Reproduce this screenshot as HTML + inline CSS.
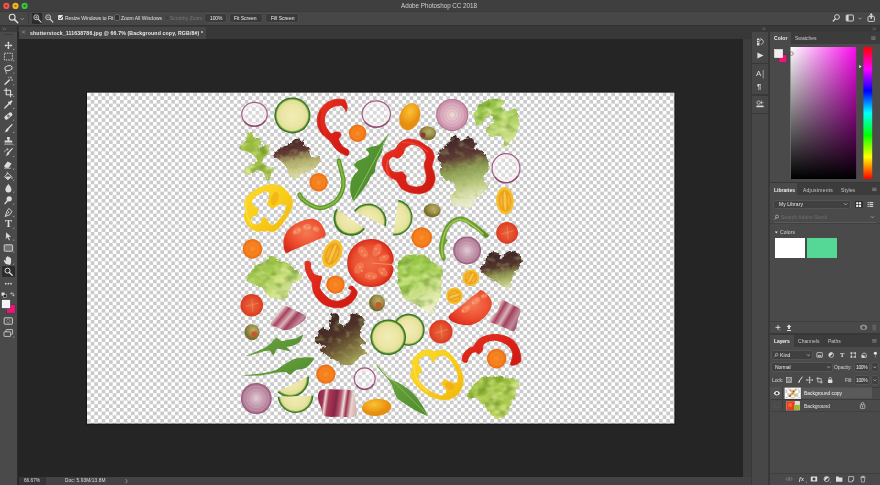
<!DOCTYPE html>
<html lang="en">
<head>
<meta charset="utf-8">
<title>Adobe Photoshop CC 2018</title>
<style>
html,body{margin:0;padding:0;background:#252525;}
#app{position:relative;width:880px;height:485px;overflow:hidden;background:#252525;font-family:"Liberation Sans",sans-serif;}
#app>div{position:absolute;}
#app>span{position:absolute;white-space:nowrap;will-change:transform;}
#app>svg{position:absolute;left:0;top:0;}
</style>
</head>
<body>
<div id="app">
<div style="left:0px;top:0px;width:880px;height:11px;background:#3f3f3f;"></div>
<div style="left:0px;top:11px;width:880px;height:14.6px;background:#474747;"></div>
<div style="left:0px;top:10.5px;width:880px;height:0.6px;background:#3a3a3a;"></div>
<div style="left:0px;top:25.6px;width:880px;height:6px;background:#383838;"></div>
<div style="left:0px;top:25.2px;width:880px;height:0.6px;background:#333;"></div>
<div style="left:0px;top:31.6px;width:17.2px;height:453.4px;background:#4a4a4a;"></div>
<div style="left:0px;top:25.6px;width:17.2px;height:6px;background:#3c3c3c;"></div>
<div style="left:17.2px;top:25.6px;width:1.3px;height:460px;background:#2b2b2b;"></div>
<div style="left:18.5px;top:25.6px;width:732.3px;height:13.4px;background:#383838;"></div>
<div style="left:18.5px;top:26.8px;width:187px;height:12.2px;background:#464646;"></div>
<div style="left:18.5px;top:39px;width:724.5px;height:438.3px;background:#252525;"></div>
<div style="left:742.8px;top:39px;width:8px;height:446px;background:#3e3e3e;"></div>
<div style="left:18.5px;top:477.3px;width:732.3px;height:7.7px;background:#434343;"></div>
<div style="left:18.5px;top:477.3px;width:27px;height:7.7px;background:#363636;"></div>
<div style="left:750.8px;top:25.6px;width:129.2px;height:459.4px;background:#383838;"></div>
<div style="left:752px;top:32px;width:16.4px;height:30.5px;background:#474747;"></div>
<div style="left:752px;top:64px;width:16.4px;height:30px;background:#474747;"></div>
<div style="left:752px;top:95.5px;width:16.4px;height:17px;background:#474747;"></div>
<div style="left:752px;top:114px;width:16.4px;height:371px;background:#474747;"></div>
<div style="left:770.2px;top:32px;width:109.8px;height:12px;background:#3c3c3c;"></div>
<div style="left:770.2px;top:32px;width:20.5px;height:12.5px;background:#4a4a4a;"></div>
<div style="left:770.2px;top:44px;width:109.8px;height:137.5px;background:#4a4a4a;"></div>
<div style="left:770.2px;top:183.3px;width:109.8px;height:12px;background:#3c3c3c;"></div>
<div style="left:770.2px;top:183.3px;width:26.5px;height:12.5px;background:#4a4a4a;"></div>
<div style="left:770.2px;top:195.3px;width:109.8px;height:138px;background:#4a4a4a;"></div>
<div style="left:770.2px;top:321.5px;width:109.8px;height:11.8px;background:#494949;"></div>
<div style="left:770.2px;top:321.3px;width:109.8px;height:0.6px;background:#3f3f3f;"></div>
<div style="left:770.2px;top:334.8px;width:109.8px;height:12px;background:#3c3c3c;"></div>
<div style="left:770.2px;top:334.8px;width:23.5px;height:12.5px;background:#4a4a4a;"></div>
<div style="left:770.2px;top:346.8px;width:109.8px;height:138.2px;background:#4a4a4a;"></div>
<div style="left:770.2px;top:473px;width:109.8px;height:12px;background:#494949;"></div>
<div style="left:770.2px;top:472.8px;width:109.8px;height:0.6px;background:#3f3f3f;"></div>
<div style="left:28.3px;top:13px;width:0.6px;height:10.5px;background:#3a3a3a;"></div>
<div style="left:32px;top:12.8px;width:10.4px;height:10.8px;background:#2c2c2c;"></div>
<div style="left:58.2px;top:15.3px;width:5.2px;height:5.2px;background:#e6e6e6;border-radius:1px;"></div>
<div style="left:114.6px;top:15.4px;width:4.6px;height:4.6px;background:#333;border-radius:1px;box-shadow:0 0 0 0.6px #808080;"></div>
<div style="left:164.6px;top:15.4px;width:4.2px;height:4.2px;background:#404040;border-radius:1px;box-shadow:0 0 0 0.5px #555;"></div>
<div style="left:205px;top:14.2px;width:20.599999999999994px;height:7.4px;background:#3a3a3a;border-radius:1.3px;box-shadow:0 0 0 0.5px #5a5a5a;"></div>
<div style="left:230.4px;top:14.2px;width:31.49999999999997px;height:7.4px;background:#3a3a3a;border-radius:1.3px;box-shadow:0 0 0 0.5px #5a5a5a;"></div>
<div style="left:266.3px;top:14.2px;width:31.69999999999999px;height:7.4px;background:#3a3a3a;border-radius:1.3px;box-shadow:0 0 0 0.5px #5a5a5a;"></div>
<div style="left:869.9px;top:15.8px;width:2.6px;height:1.6px;background:#474747;"></div>
<div style="left:4px;top:33.6px;width:9px;height:0.5px;background:#3a3a3a;"></div>
<div style="left:2px;top:265.8px;width:13px;height:11.4px;background:#2c2c2c;border-radius:1px;"></div>
<div style="left:774px;top:200.6px;width:75.6px;height:7.2px;background:#404040;border-radius:1.3px;box-shadow:0 0 0 0.5px #5e5e5e;"></div>
<div style="left:854.6px;top:200.6px;width:8px;height:7.8px;background:#2e2e2e;border-radius:1px;"></div>
<div style="left:774px;top:221.6px;width:101.5px;height:0.5px;background:#5a5a5a;"></div>
<div style="left:770.2px;top:222.8px;width:109.8px;height:1.4px;background:#414141;"></div>
<div style="left:775px;top:238.4px;width:30.2px;height:19.6px;background:#ffffff;"></div>
<div style="left:807px;top:238.4px;width:30.2px;height:19.6px;background:#55d896;"></div>
<div style="left:786.6px;top:329.8px;width:4.8px;height:0.9px;background:#e0e0e0;"></div>
<div style="left:772px;top:351.4px;width:40px;height:7.4px;background:#404040;border-radius:1.3px;box-shadow:0 0 0 0.5px #5e5e5e;"></div>
<div style="left:772px;top:363.4px;width:60.2px;height:7.6px;background:#404040;border-radius:1.3px;box-shadow:0 0 0 0.5px #5e5e5e;"></div>
<div style="left:854.6px;top:363.4px;width:14.6px;height:7.6px;background:#404040;border-radius:1.3px;box-shadow:0 0 0 0.5px #5e5e5e;"></div>
<div style="left:871.6px;top:363.4px;width:6.4px;height:7.6px;background:#404040;border-radius:1.3px;box-shadow:0 0 0 0.5px #5e5e5e;"></div>
<div style="left:854.6px;top:376.4px;width:14.6px;height:7.6px;background:#404040;border-radius:1.3px;box-shadow:0 0 0 0.5px #5e5e5e;"></div>
<div style="left:871.6px;top:376.4px;width:6.4px;height:7.6px;background:#404040;border-radius:1.3px;box-shadow:0 0 0 0.5px #5e5e5e;"></div>
<div style="left:770.5px;top:386.8px;width:109.5px;height:0.5px;background:#3c3c3c;"></div>
<div style="left:770.2px;top:387.2px;width:102px;height:11.6px;background:#515151;"></div>
<div style="left:802px;top:387.6px;width:70.2px;height:10.8px;background:#5a5a5a;"></div>
<div style="left:770.5px;top:399.2px;width:109.5px;height:0.5px;background:#3c3c3c;"></div>
<div style="left:770.5px;top:411.4px;width:109.5px;height:0.5px;background:#404040;"></div>
<div style="left:782.2px;top:387.2px;width:0.5px;height:24.2px;background:#3e3e3e;"></div>
<svg width="880" height="485" viewBox="0 0 880 485">
<defs>
<pattern id="chk" x="87" y="92.6" width="7.3334" height="7.3334" patternUnits="userSpaceOnUse">
<rect width="7.3334" height="7.3334" fill="#fff"/><rect x="3.6667" width="3.6667" height="3.6667" fill="#cbcbcb"/><rect y="3.6667" width="3.6667" height="3.6667" fill="#cbcbcb"/></pattern>
<radialGradient id="gCuc"><stop offset="0" stop-color="#f1edb6"/><stop offset="0.6" stop-color="#ebe6a4"/><stop offset="0.84" stop-color="#e0de98"/><stop offset="0.89" stop-color="#8ab048"/><stop offset="0.94" stop-color="#3f7f26"/><stop offset="1" stop-color="#2a641a"/></radialGradient>
<radialGradient id="gCar"><stop offset="0" stop-color="#f9922e"/><stop offset="0.45" stop-color="#f47c1a"/><stop offset="0.55" stop-color="#f68622"/><stop offset="0.9" stop-color="#f07214"/><stop offset="1" stop-color="#e8660e"/></radialGradient>
<radialGradient id="gOni"><stop offset="0" stop-color="#eedcd4"/><stop offset="0.35" stop-color="#e2c0c8"/><stop offset="0.7" stop-color="#d8a8ba"/><stop offset="0.92" stop-color="#c88ea6"/><stop offset="1" stop-color="#a25a80"/></radialGradient>
<radialGradient id="gOniR"><stop offset="0" stop-color="#e2ccd6"/><stop offset="0.4" stop-color="#c8a0b4"/><stop offset="0.85" stop-color="#b27c96"/><stop offset="1" stop-color="#925276"/></radialGradient>
<radialGradient id="gTom"><stop offset="0" stop-color="#f2623a"/><stop offset="0.6" stop-color="#e8422a"/><stop offset="1" stop-color="#dc3020"/></radialGradient>
<radialGradient id="gChe"><stop offset="0" stop-color="#e8683a"/><stop offset="0.7" stop-color="#e24a2a"/><stop offset="1" stop-color="#d83a22"/></radialGradient>
<radialGradient id="gYel" cx="0.42" cy="0.32"><stop offset="0" stop-color="#f9c236"/><stop offset="0.6" stop-color="#f0a41c"/><stop offset="1" stop-color="#e68e12"/></radialGradient>
<radialGradient id="gYelC"><stop offset="0" stop-color="#f4b028"/><stop offset="0.8" stop-color="#f5bc2a"/><stop offset="1" stop-color="#f2c432"/></radialGradient>
<radialGradient id="gOli" cx="0.58" cy="0.38"><stop offset="0" stop-color="#bcae68"/><stop offset="0.65" stop-color="#9a8e46"/><stop offset="1" stop-color="#7a7032"/></radialGradient>
<linearGradient id="gLetG" x1="0" y1="0" x2="0.3" y2="1"><stop offset="0" stop-color="#86b83c"/><stop offset="0.5" stop-color="#a6cc5a"/><stop offset="1" stop-color="#cfe08e"/></linearGradient>
<linearGradient id="gLetG2" x1="0" y1="0" x2="0" y2="1"><stop offset="0" stop-color="#7fb63a"/><stop offset="0.6" stop-color="#9cc850"/><stop offset="1" stop-color="#b8d672"/></linearGradient>
<linearGradient id="gLetF" x1="0" y1="0" x2="0.8" y2="1"><stop offset="0" stop-color="#88b43a"/><stop offset="0.45" stop-color="#a8cc54"/><stop offset="0.8" stop-color="#cfe08c"/><stop offset="1" stop-color="#e4eaae"/></linearGradient>
<linearGradient id="gLetC" x1="0.3" y1="0" x2="0.65" y2="1"><stop offset="0" stop-color="#90c442"/><stop offset="0.4" stop-color="#a6d058"/><stop offset="0.65" stop-color="#cce08c"/><stop offset="0.85" stop-color="#e6ecbc"/><stop offset="1" stop-color="#f2f2d8"/></linearGradient>
<linearGradient id="gLetO" x1="0.2" y1="0" x2="0.5" y2="1"><stop offset="0" stop-color="#90b634"/><stop offset="0.6" stop-color="#a6c648"/><stop offset="1" stop-color="#bcd460"/></linearGradient>
<linearGradient id="gLetD2" x1="0.4" y1="0" x2="0.6" y2="1"><stop offset="0" stop-color="#3a2226"/><stop offset="0.4" stop-color="#54342e"/><stop offset="0.6" stop-color="#8e9450"/><stop offset="0.85" stop-color="#c4cc84"/><stop offset="1" stop-color="#e8e8c0"/></linearGradient>
<linearGradient id="gRad2" x1="0" y1="0.2" x2="1" y2="0.8"><stop offset="0" stop-color="#c8909c"/><stop offset="0.2" stop-color="#eadcd8"/><stop offset="0.35" stop-color="#a8405c"/><stop offset="0.5" stop-color="#d8b4bc"/><stop offset="0.62" stop-color="#a2405c"/><stop offset="0.8" stop-color="#c08a9a"/><stop offset="1" stop-color="#8a2e4c"/></linearGradient>
<linearGradient id="gRadB" x1="0" y1="0" x2="1" y2="0.1"><stop offset="0" stop-color="#8e2848"/><stop offset="0.16" stop-color="#a03454"/><stop offset="0.22" stop-color="#ead8d0"/><stop offset="0.3" stop-color="#a83c58"/><stop offset="0.5" stop-color="#8a2444"/><stop offset="0.62" stop-color="#b86078"/><stop offset="0.7" stop-color="#efe2d8"/><stop offset="0.78" stop-color="#9c3050"/><stop offset="0.9" stop-color="#e8d4cc"/><stop offset="1" stop-color="#d8b8b4"/></linearGradient>
<linearGradient id="gAru2" x1="0" y1="0" x2="1" y2="0.6"><stop offset="0" stop-color="#72a842"/><stop offset="1" stop-color="#548f30"/></linearGradient>
<linearGradient id="gPepR" x1="0" y1="0" x2="1" y2="1"><stop offset="0" stop-color="#e83420"/><stop offset="0.5" stop-color="#dc2218"/><stop offset="1" stop-color="#cc1a12"/></linearGradient>
<linearGradient id="gPepG" x1="0" y1="0" x2="1" y2="0.5"><stop offset="0" stop-color="#5e9426"/><stop offset="0.5" stop-color="#74a630"/><stop offset="1" stop-color="#5a8c24"/></linearGradient>
<linearGradient id="gPepY" x1="0" y1="0" x2="1" y2="1"><stop offset="0" stop-color="#fbdc2a"/><stop offset="0.55" stop-color="#f8cc18"/><stop offset="1" stop-color="#f2b410"/></linearGradient>
<radialGradient id="gTomB"><stop offset="0" stop-color="#f06a44"/><stop offset="0.7" stop-color="#ec5232"/><stop offset="0.9" stop-color="#e23a22"/><stop offset="1" stop-color="#d42c1a"/></radialGradient>
<radialGradient id="gTomW" cx="0.55" cy="0.4" r="0.65"><stop offset="0" stop-color="#f47a52"/><stop offset="0.55" stop-color="#ee5434"/><stop offset="0.85" stop-color="#e43a24"/><stop offset="1" stop-color="#d82c1c"/></radialGradient>
<linearGradient id="gLetG3" x1="0" y1="0" x2="0.2" y2="1"><stop offset="0" stop-color="#a6c448"/><stop offset="0.5" stop-color="#94b63a"/><stop offset="1" stop-color="#b0ca5a"/></linearGradient>
<linearGradient id="gLetR1" x1="0.3" y1="0" x2="0.5" y2="1"><stop offset="0" stop-color="#3e2024"/><stop offset="0.34" stop-color="#623a34"/><stop offset="0.56" stop-color="#aca868"/><stop offset="0.8" stop-color="#ccca8c"/><stop offset="1" stop-color="#dcdcaa"/></linearGradient>
<linearGradient id="gLetR" x1="0.3" y1="0" x2="0.45" y2="1"><stop offset="0" stop-color="#3c2226"/><stop offset="0.3" stop-color="#5c3a34"/><stop offset="0.48" stop-color="#8a9a50"/><stop offset="0.68" stop-color="#b4c47a"/><stop offset="0.85" stop-color="#dce2b0"/><stop offset="1" stop-color="#ecedd0"/></linearGradient>
<linearGradient id="gLetD" x1="0" y1="0" x2="0.6" y2="1"><stop offset="0" stop-color="#36201e"/><stop offset="0.5" stop-color="#4e3228"/><stop offset="0.78" stop-color="#7a6a3c"/><stop offset="1" stop-color="#a09c58"/></linearGradient>
<linearGradient id="gRad" x1="0" y1="0" x2="1" y2="0.4"><stop offset="0" stop-color="#9a2a4c"/><stop offset="0.3" stop-color="#e8d0d6"/><stop offset="0.5" stop-color="#a03054"/><stop offset="0.75" stop-color="#d8b0bc"/><stop offset="1" stop-color="#8a2444"/></linearGradient>
<linearGradient id="gAru" x1="0" y1="0" x2="1" y2="1"><stop offset="0" stop-color="#5e9c36"/><stop offset="1" stop-color="#47872c"/></linearGradient>
<filter id="rough" x="-10%" y="-10%" width="120%" height="120%"><feTurbulence type="fractalNoise" baseFrequency="0.22" numOctaves="2" seed="4" result="n"/><feDisplacementMap in="SourceGraphic" in2="n" scale="5" xChannelSelector="R" yChannelSelector="G"/></filter>
<filter id="leaf" x="-15%" y="-15%" width="130%" height="130%" color-interpolation-filters="sRGB">
<feTurbulence type="fractalNoise" baseFrequency="0.25" numOctaves="2" seed="4" result="n"/>
<feDisplacementMap in="SourceGraphic" in2="n" scale="3.5" xChannelSelector="R" yChannelSelector="G" result="d"/>
<feTurbulence type="fractalNoise" baseFrequency="0.09 0.12" numOctaves="2" seed="11" result="t"/>
<feColorMatrix in="t" type="matrix" values="0 0 0 0 0.9  0 0 0 0 0.95  0 0 0 0 0.62  0 1.8 0 0 -0.72" result="hl"/>
<feComposite in="hl" in2="d" operator="in" result="hl2"/>
<feColorMatrix in="t" type="matrix" values="0 0 0 0 0.3  0 0 0 0 0.48  0 0 0 0 0.08  0 0 1.4 0 -0.64" result="sh"/>
<feComposite in="sh" in2="d" operator="in" result="sh2"/>
<feMerge><feMergeNode in="d"/><feMergeNode in="hl2"/><feMergeNode in="sh2"/></feMerge>
</filter>
<filter id="leafR" x="-15%" y="-15%" width="130%" height="130%" color-interpolation-filters="sRGB">
<feTurbulence type="fractalNoise" baseFrequency="0.3" numOctaves="2" seed="8" result="n"/>
<feDisplacementMap in="SourceGraphic" in2="n" scale="4.5" xChannelSelector="R" yChannelSelector="G" result="d"/>
<feTurbulence type="fractalNoise" baseFrequency="0.12 0.16" numOctaves="2" seed="21" result="t"/>
<feColorMatrix in="t" type="matrix" values="0 0 0 0 0.66  0 0 0 0 0.7  0 0 0 0 0.42  0 1.4 0 0 -0.72" result="hl"/>
<feComposite in="hl" in2="d" operator="in" result="hl2"/>
<feMerge><feMergeNode in="d"/><feMergeNode in="hl2"/></feMerge>
</filter>
<filter id="rough2" x="-10%" y="-10%" width="120%" height="120%"><feTurbulence type="fractalNoise" baseFrequency="0.3" numOctaves="2" seed="9" result="n"/><feDisplacementMap in="SourceGraphic" in2="n" scale="3" xChannelSelector="R" yChannelSelector="G"/></filter>
</defs>
<rect x="86.3" y="91.89999999999999" width="589.0" height="332.6" fill="#111"/>
<rect x="87" y="92.6" width="587.4" height="331.0" fill="url(#chk)"/>
<ellipse cx="254.5" cy="114.2" rx="11.1" ry="10.200000000000001" fill="rgba(255,255,255,0.28)" stroke="#f4edf0" stroke-width="2.6"/>
<ellipse cx="254.5" cy="114.35000000000001" rx="12.75" ry="11.9" fill="none" stroke="#a25c86" stroke-width="1.2"/>
<path d="M244.7,121.9 A12.6,11.7 0 0 0 264.9,121.0" fill="none" stroke="#8c466e" stroke-width="1.5" stroke-linecap="round" opacity="0.8"/>
<circle cx="292.4" cy="115.4" r="18" fill="url(#gCuc)"/>
<path d="M344.6,99.9C343.4,99.3 341.0,99.1 338.8,99.2C336.7,99.3 333.9,99.5 331.6,100.4C329.4,101.2 327.1,102.6 325.1,104.3C323.2,105.9 321.4,107.9 320.1,110.0C318.8,112.2 317.9,114.8 317.5,117.2C317.1,119.6 317.1,122.2 317.5,124.5C317.9,126.7 318.9,129.0 320.1,130.9C321.3,132.9 322.9,134.4 324.4,136.0C326.0,137.6 328.0,138.8 329.5,140.3C330.9,141.9 331.9,143.8 333.1,145.4C334.3,146.9 335.2,148.4 336.7,149.7C338.1,151.0 339.9,152.3 341.7,153.3C343.6,154.3 346.6,155.9 347.8,155.5C348.9,155.0 349.3,151.7 348.7,150.4C348.0,149.1 345.3,148.7 343.9,147.5C342.5,146.3 341.1,144.6 340.3,143.2C339.4,141.8 338.7,140.2 338.8,138.9C339.0,137.6 340.9,136.4 341.0,135.3C341.1,134.2 340.5,132.9 339.6,132.4C338.6,131.9 336.6,131.9 335.2,132.1C333.9,132.3 332.8,134.1 331.6,133.8C330.4,133.5 329.1,131.8 328.0,130.2C326.9,128.7 325.7,126.5 325.1,124.5C324.5,122.4 324.2,120.0 324.4,118.0C324.7,115.9 325.5,113.9 326.6,112.2C327.7,110.5 329.2,108.9 330.9,107.9C332.6,106.8 334.9,106.1 336.7,105.7C338.5,105.3 340.4,105.2 341.7,105.7C343.1,106.2 343.9,107.6 344.6,108.6C345.3,109.5 345.6,111.7 346.1,111.5C346.5,111.2 347.2,108.6 347.2,107.1C347.2,105.7 346.5,104.0 346.1,102.8C345.6,101.6 345.8,100.5 344.6,99.9Z" fill="url(#gPepR)"  stroke="#d82218" stroke-width="0.9" stroke-linejoin="round"/>
<circle cx="357.6" cy="133.2" r="8.7" fill="url(#gCar)"/>
<ellipse cx="376.3" cy="113.9" rx="12.5" ry="11.4" fill="rgba(255,255,255,0.28)" stroke="#f4edf0" stroke-width="2.6"/>
<ellipse cx="376.3" cy="114.05000000000001" rx="14.15" ry="13.1" fill="none" stroke="#a25c86" stroke-width="1.2"/>
<path d="M365.4,122.4 A14.0,12.9 0 0 0 387.9,121.4" fill="none" stroke="#8c466e" stroke-width="1.5" stroke-linecap="round" opacity="0.8"/>
<ellipse cx="409.8" cy="116.6" rx="10" ry="14" transform="rotate(20 409.8 116.6)" fill="url(#gYel)"/>
<ellipse cx="427.7" cy="133.3" rx="8.3" ry="7" fill="url(#gOli)"/>
<circle cx="423.1" cy="135.1" r="2.5" fill="#96303c"/>
<circle cx="452.2" cy="114.9" r="16" fill="url(#gOni)"/>
<circle cx="452.2" cy="114.9" r="12.8" fill="none" stroke="#b77a9c" stroke-width="0.5" opacity="0.4"/>
<circle cx="452.2" cy="114.9" r="9.6" fill="none" stroke="#b77a9c" stroke-width="0.5" opacity="0.4"/>
<circle cx="452.2" cy="114.9" r="6.4" fill="none" stroke="#b77a9c" stroke-width="0.5" opacity="0.4"/>
<circle cx="452.2" cy="114.9" r="3.5" fill="none" stroke="#b77a9c" stroke-width="0.5" opacity="0.4"/>
<path d="M474.6,113.5C475.4,111.1 477.2,107.2 479.5,104.9C481.8,102.6 485.3,101.0 488.2,99.9C491.1,98.9 494.1,98.5 496.8,98.7C499.5,98.9 503.4,99.5 504.2,101.2C505.1,102.8 500.9,107.0 501.8,108.6C502.6,110.2 506.9,111.1 509.2,111.1C511.5,111.1 513.7,107.4 515.4,108.6C517.0,109.8 518.7,115.0 519.1,118.5C519.5,122.0 518.7,126.3 517.8,129.6C517.0,132.9 516.0,135.6 514.1,138.3C512.3,141.0 508.6,144.0 506.7,145.7C504.9,147.3 503.4,149.4 503.0,148.2C502.6,146.9 505.1,140.3 504.2,138.3C503.4,136.2 500.3,136.0 498.1,135.8C495.8,135.6 492.7,137.7 490.6,137.0C488.6,136.4 486.1,133.9 485.7,132.1C485.3,130.2 486.7,127.8 488.2,125.9C489.6,124.1 493.9,122.6 494.3,121.0C494.8,119.3 492.3,116.2 490.6,116.0C489.0,115.8 486.5,118.1 484.5,119.7C482.4,121.4 479.9,125.9 478.3,125.9C476.6,125.9 475.2,121.8 474.6,119.7C473.9,117.7 473.7,116.0 474.6,113.5Z" fill="url(#gLetG)" filter="url(#leaf)" />
<path d="M248.0,133.1C249.0,131.8 251.1,131.9 252.0,132.5C253.0,133.2 252.5,136.0 253.7,137.1C254.9,138.1 257.9,138.0 259.4,138.8C260.9,139.5 263.1,140.3 262.8,141.6C262.5,142.9 258.0,145.8 257.7,146.7C257.4,147.7 259.6,147.6 261.1,147.3C262.6,147.0 265.3,144.7 266.7,145.0C268.2,145.3 269.5,147.4 269.6,149.0C269.7,150.6 268.4,152.8 267.3,154.6C266.2,156.5 263.3,158.7 262.8,160.3C262.2,161.9 262.9,163.1 263.9,164.3C265.0,165.5 267.3,167.1 269.0,167.7C270.7,168.2 273.7,166.7 274.1,167.7C274.5,168.6 272.1,171.2 271.3,173.4C270.4,175.5 270.0,180.0 269.0,180.7C268.1,181.5 266.7,179.3 265.6,177.9C264.6,176.5 264.1,173.4 262.8,172.2C261.5,171.0 259.7,170.1 257.7,170.5C255.7,170.9 252.9,173.8 250.9,174.5C248.9,175.1 246.7,175.2 245.8,174.5C244.8,173.7 244.5,171.5 245.2,170.0C245.9,168.4 248.0,166.7 249.7,165.4C251.4,164.1 254.3,163.2 255.4,162.0C256.5,160.8 257.1,159.4 256.5,158.0C256.0,156.7 253.9,155.3 252.0,154.1C250.1,152.8 247.3,151.5 245.2,150.7C243.1,149.8 240.2,149.9 239.5,149.0C238.9,148.0 240.1,146.4 241.2,145.0C242.4,143.6 245.2,142.5 246.3,140.5C247.5,138.5 247.1,134.4 248.0,133.1Z" fill="url(#gLetG3)" filter="url(#leaf)" />
<path d="M274.1,155.2C274.5,153.9 276.3,151.1 278.1,149.5C279.9,148.0 282.6,147.3 284.9,146.1C287.2,145.0 289.7,144.0 291.7,142.7C293.7,141.5 295.1,139.2 296.8,138.8C298.5,138.3 300.7,138.9 301.9,139.9C303.1,140.9 302.9,143.5 304.2,145.0C305.4,146.5 308.3,147.4 309.3,149.0C310.2,150.6 309.0,153.1 309.8,154.6C310.7,156.2 312.8,158.0 314.4,158.0C316.0,158.1 318.5,154.7 319.5,155.2C320.4,155.7 320.5,159.0 320.0,160.9C319.6,162.8 318.1,164.9 316.6,166.5C315.1,168.2 313.0,169.4 311.0,170.5C308.9,171.7 306.2,172.1 304.2,173.4C302.1,174.6 300.6,177.1 298.5,177.9C296.4,178.6 293.4,178.8 291.7,177.9C290.0,176.9 289.4,174.3 288.3,172.2C287.2,170.1 286.2,167.3 284.9,165.4C283.6,163.5 281.9,162.2 280.4,160.9C278.8,159.6 276.9,158.4 275.8,157.5C274.8,156.5 273.7,156.5 274.1,155.2Z" fill="url(#gLetR1)" filter="url(#leafR)" />
<path d="M389.1,133.3C389.0,133.8 386.9,137.8 386.2,139.5C385.4,141.3 383.7,144.5 383.2,146.1C382.6,147.8 382.5,150.5 382.0,151.9C381.5,153.3 380.2,155.6 379.6,156.8C378.9,158.1 377.6,159.5 377.1,161.0C376.5,162.4 375.8,166.0 375.4,167.6C375.1,169.1 375.2,171.4 374.6,172.5C374.1,173.6 372.1,174.7 371.3,175.8C370.5,176.9 369.7,179.2 368.8,180.7C368.0,182.3 365.9,185.6 364.7,187.3C363.5,189.1 361.0,192.4 359.8,193.9C358.6,195.5 356.5,198.0 355.7,198.9C354.8,199.8 353.8,201.2 353.2,200.5C352.5,199.9 351.1,195.7 350.7,193.9C350.3,192.2 350.2,189.1 350.2,187.3C350.3,185.6 350.7,182.4 351.2,180.7C351.7,179.1 353.1,176.4 354.0,175.0C354.9,173.5 358.1,171.3 358.1,170.0C358.1,168.7 354.0,166.3 354.0,165.1C354.0,163.9 356.9,161.8 358.1,161.0C359.3,160.1 361.8,159.2 363.1,158.5C364.4,157.8 367.3,156.8 368.0,156.0C368.8,155.3 369.1,153.6 368.8,152.7C368.6,151.8 365.8,150.2 366.0,149.4C366.3,148.7 369.2,147.4 370.5,147.0C371.7,146.5 374.2,146.5 375.4,146.1C376.6,145.8 378.5,145.3 379.6,144.5C380.6,143.7 382.2,141.6 383.2,140.4C384.2,139.2 386.2,136.4 387.0,135.4C387.8,134.5 389.2,132.7 389.1,133.3Z" fill="url(#gAru)"/>
<path d="M388.6,134 Q372,165 353.6,199.6" stroke="#a9cf72" stroke-width="0.7" fill="none"/>
<path d="M409.6,138.9C412.0,139.1 415.6,139.8 418.3,140.8C420.9,141.9 423.2,143.6 425.5,145.2C427.8,146.7 430.6,148.2 432.0,150.2C433.4,152.2 434.2,154.8 434.2,157.4C434.2,160.1 432.0,163.4 432.0,166.1C432.0,168.7 433.7,170.9 434.2,173.3C434.6,175.7 435.5,177.9 434.9,180.5C434.3,183.2 432.8,187.0 430.6,189.2C428.3,191.3 424.4,192.9 421.2,193.5C417.9,194.1 414.2,193.5 411.1,192.8C407.9,192.0 404.6,190.7 402.4,189.2C400.3,187.6 399.3,185.0 398.1,183.4C396.9,181.8 396.8,181.0 395.2,179.8C393.6,178.6 390.6,178.0 388.7,176.2C386.8,174.4 384.7,171.5 383.7,169.0C382.6,166.4 382.0,163.4 382.2,161.0C382.5,158.6 383.7,156.2 385.1,154.5C386.5,152.8 389.2,151.9 390.9,150.9C392.6,150.0 393.9,150.0 395.2,148.8C396.5,147.6 397.4,145.2 398.8,143.7C400.3,142.3 402.1,140.9 403.9,140.1C405.7,139.3 407.2,138.8 409.6,138.9Z M411.8,144.4C414.1,144.2 417.0,145.4 419.0,146.6C421.1,147.8 422.9,149.8 424.1,151.6C425.3,153.4 426.2,155.3 426.2,157.4C426.2,159.6 424.2,162.2 424.1,164.6C423.9,167.0 425.1,169.4 425.5,171.8C425.9,174.3 426.6,176.9 426.2,179.1C425.9,181.2 424.9,183.5 423.3,184.8C421.8,186.2 419.1,186.9 416.8,187.0C414.6,187.1 411.4,186.5 409.6,185.6C407.8,184.6 406.6,182.8 406.0,181.2C405.4,179.7 406.7,177.7 406.0,176.2C405.3,174.6 403.3,172.4 401.7,171.8C400.1,171.2 398.3,172.8 396.6,172.6C395.0,172.3 392.9,171.7 391.6,170.4C390.3,169.1 389.1,166.4 388.7,164.6C388.3,162.8 388.7,160.9 389.4,159.6C390.2,158.3 391.6,156.9 393.0,156.7C394.5,156.5 396.4,158.6 398.1,158.1C399.8,157.7 401.9,155.5 403.1,153.8C404.3,152.1 403.9,149.6 405.3,148.0C406.7,146.5 409.5,144.7 411.8,144.4Z" fill="url(#gPepR)" fill-rule="evenodd" stroke="#d82218" stroke-width="0.7" stroke-linejoin="round"/>
<path d="M388,160 Q384,170 392,180" stroke="#f4644a" stroke-width="1.3" fill="none" opacity="0.7" stroke-linecap="round"/>
<path d="M403,142.5 Q418,142 428,152" stroke="#f4644a" stroke-width="1.2" fill="none" opacity="0.6" stroke-linecap="round"/>
<path d="M320.5,112 Q317.5,124 322.5,134" stroke="#b81810" stroke-width="1.4" fill="none" opacity="0.55" stroke-linecap="round"/>
<path d="M437.5,158.1C437.7,155.4 440.6,150.6 442.4,148.2C444.3,145.7 446.5,145.3 448.6,143.2C450.7,141.2 452.5,136.2 454.8,135.8C457.0,135.4 459.7,140.5 462.2,140.7C464.7,141.0 467.4,136.6 469.6,137.0C471.9,137.4 475.0,141.4 475.8,143.2C476.6,145.1 473.3,146.7 474.6,148.2C475.8,149.6 481.0,149.6 483.2,151.9C485.5,154.1 487.3,158.7 488.2,161.8C489.0,164.9 489.0,167.5 488.2,170.4C487.3,173.3 483.2,176.4 483.2,179.1C483.2,181.8 488.4,184.0 488.2,186.5C488.0,189.0 484.0,191.9 482.0,193.9C479.9,196.0 477.9,196.6 475.8,198.9C473.7,201.1 472.3,206.3 469.6,207.5C466.9,208.7 462.6,206.9 459.7,206.3C456.8,205.7 453.8,205.5 452.3,203.8C450.9,202.2 450.5,198.9 451.1,196.4C451.7,193.9 455.8,191.4 456.0,189.0C456.2,186.5 454.4,183.0 452.3,181.5C450.2,180.1 445.7,182.0 443.7,180.3C441.6,178.7 440.4,174.3 439.9,171.7C439.5,169.0 441.6,166.5 441.2,164.2C440.8,162.0 437.3,160.7 437.5,158.1Z" fill="url(#gLetR)" filter="url(#leafR)" />
<ellipse cx="506" cy="168" rx="12.3" ry="12.9" fill="rgba(255,255,255,0.28)" stroke="#f4edf0" stroke-width="2.6"/>
<ellipse cx="506" cy="168.15" rx="13.950000000000001" ry="14.6" fill="none" stroke="#a25c86" stroke-width="1.2"/>
<path d="M495.3,177.5 A13.8,14.4 0 0 0 517.4,176.4" fill="none" stroke="#8c466e" stroke-width="1.5" stroke-linecap="round" opacity="0.8"/>
<circle cx="318.6" cy="182.2" r="9.2" fill="url(#gCar)"/>
<path d="M272.5,184.4C275.6,184.4 278.7,185.2 281.2,186.5C283.7,187.9 285.9,190.2 287.7,192.3C289.5,194.5 291.3,197.1 292.0,199.5C292.7,201.9 292.6,204.2 292.0,206.7C291.4,209.3 289.7,212.3 288.4,214.7C287.1,217.1 285.6,219.0 284.1,221.2C282.5,223.3 280.9,225.9 279.0,227.7C277.1,229.5 274.7,231.5 272.5,232.0C270.4,232.5 268.4,230.7 266.0,230.6C263.6,230.4 260.6,231.6 258.1,231.3C255.6,230.9 252.9,230.0 250.9,228.4C248.8,226.8 246.9,224.1 245.8,221.9C244.7,219.7 244.4,217.4 244.4,215.4C244.4,213.4 245.8,211.6 245.8,209.6C245.8,207.7 244.1,206.0 244.4,203.9C244.6,201.7 245.7,198.8 247.3,196.6C248.8,194.5 251.2,192.6 253.8,190.9C256.3,189.2 259.3,187.6 262.4,186.5C265.5,185.5 269.4,184.4 272.5,184.4Z M266.0,190.9C267.5,191.0 269.2,192.3 269.6,193.8C270.1,195.2 269.2,197.7 268.9,199.5C268.6,201.3 267.3,203.2 267.9,204.6C268.5,206.0 271.1,207.8 272.8,207.9C274.5,208.0 276.4,205.7 278.3,205.0C280.2,204.3 282.7,203.6 284.1,203.9C285.4,204.1 286.2,205.2 286.2,206.7C286.2,208.3 285.1,211.2 284.1,213.2C283.0,215.3 281.4,217.1 279.7,219.0C278.0,220.9 275.6,223.9 274.0,224.8C272.3,225.6 271.0,225.1 269.6,224.1C268.3,223.0 267.2,219.3 266.0,218.3C264.8,217.3 263.4,217.4 262.4,218.3C261.5,219.1 261.5,222.3 260.3,223.3C259.1,224.4 256.8,225.1 255.2,224.8C253.6,224.4 251.4,222.5 250.9,221.2C250.4,219.9 251.4,217.9 252.3,216.8C253.3,215.8 255.7,215.9 256.6,214.7C257.6,213.5 258.6,211.1 258.1,209.6C257.6,208.2 254.8,207.3 253.8,206.0C252.7,204.7 251.4,203.3 251.6,201.7C251.8,200.1 253.6,198.1 255.2,196.6C256.8,195.2 259.2,194.0 261.0,193.0C262.8,192.1 264.6,190.8 266.0,190.9Z" fill="url(#gPepY)" fill-rule="evenodd" stroke="#f6c818" stroke-width="0.7" stroke-linejoin="round"/>
<ellipse cx="274.6" cy="198.6" rx="3.6" ry="7" transform="rotate(18 274.6 198.6)" fill="#eea016" opacity="0.5"/>
<path d="M246,196 Q244,214 252,226" stroke="#fde868" stroke-width="1.2" fill="none" opacity="0.6" stroke-linecap="round"/>
<path d="M338.7,160.6C339.2,162.3 340.6,167.5 341.4,170.9C342.2,174.4 343.4,177.8 343.5,181.2C343.6,184.7 343.2,188.3 342.0,191.5C340.8,194.8 338.6,198.4 336.2,200.8C333.9,203.2 330.7,204.8 328.0,206.0C325.2,207.2 322.7,208.2 319.7,208.0C316.8,207.9 313.4,206.5 310.5,204.9C307.5,203.4 304.0,200.5 302.2,198.8C300.4,197.0 300.0,195.3 299.5,194.6" fill="none" stroke="#5d9628" stroke-width="4.4" stroke-linecap="round" stroke-linejoin="round"/>
<path d="M338.7,160.6C339.2,162.3 340.6,167.5 341.4,170.9C342.2,174.4 343.4,177.8 343.5,181.2C343.6,184.7 343.2,188.3 342.0,191.5C340.8,194.8 338.6,198.4 336.2,200.8C333.9,203.2 330.7,204.8 328.0,206.0C325.2,207.2 322.7,208.2 319.7,208.0C316.8,207.9 313.4,206.5 310.5,204.9C307.5,203.4 304.0,200.5 302.2,198.8C300.4,197.0 300.0,195.3 299.5,194.6" fill="none" stroke="#8fbf4a" stroke-width="1.9800000000000002" stroke-linecap="round" stroke-linejoin="round" opacity="0.8"/>
<radialGradient id="gCh1" gradientUnits="userSpaceOnUse" cx="351.2" cy="218.0" r="17.5"><stop offset="0" stop-color="#f1edb6"/><stop offset="0.6" stop-color="#ebe6a4"/><stop offset="0.84" stop-color="#e0de98"/><stop offset="0.89" stop-color="#8ab048"/><stop offset="0.94" stop-color="#3f7f26"/><stop offset="1" stop-color="#2a641a"/></radialGradient>
<path d="M336.2,209.0 A17.5,17.5 0 0 0 365.1,228.7Z" fill="url(#gCh1)"/>
<radialGradient id="gCh2" gradientUnits="userSpaceOnUse" cx="368.4" cy="221.5" r="18.0"><stop offset="0" stop-color="#f1edb6"/><stop offset="0.6" stop-color="#ebe6a4"/><stop offset="0.84" stop-color="#e0de98"/><stop offset="0.89" stop-color="#8ab048"/><stop offset="0.94" stop-color="#3f7f26"/><stop offset="1" stop-color="#2a641a"/></radialGradient>
<path d="M353.8,211.1 A18.0,18.0 0 0 1 385.7,226.6Z" fill="url(#gCh2)"/>
<radialGradient id="gCh3" gradientUnits="userSpaceOnUse" cx="394.7" cy="217.5" r="18.1"><stop offset="0" stop-color="#f1edb6"/><stop offset="0.6" stop-color="#ebe6a4"/><stop offset="0.84" stop-color="#e0de98"/><stop offset="0.89" stop-color="#8ab048"/><stop offset="0.94" stop-color="#3f7f26"/><stop offset="1" stop-color="#2a641a"/></radialGradient>
<path d="M398.4,199.8 A18.1,18.1 0 0 1 393.1,235.5Z" fill="url(#gCh3)"/>
<ellipse cx="432.2" cy="210.4" rx="8.5" ry="7" fill="url(#gOli)"/>
<circle cx="434.8" cy="212.2" r="1.4" fill="#c8a050"/>
<ellipse cx="505" cy="200.8" rx="8.9" ry="13.8" transform="rotate(-3 505 200.8)" fill="url(#gYelC)"/>
<g transform="rotate(-3 505 200.8)"><ellipse cx="505" cy="200.8" rx="6.4" ry="10.8" fill="#e8981c" opacity="0.75"/><ellipse cx="505" cy="200.8" rx="1.4" ry="9.7" fill="#f8cc4a" opacity="0.85"/><ellipse cx="501.3" cy="200.8" rx="1.2" ry="6.2" fill="#f6c040" opacity="0.6"/><ellipse cx="508.7" cy="200.8" rx="1.2" ry="6.2" fill="#f6c040" opacity="0.6"/></g>
<path d="M285.9,252.9C284.3,251.8 283.5,246.5 283.4,243.3C283.4,240.1 284.0,236.6 285.5,233.7C287.0,230.7 289.6,228.0 292.5,225.8C295.4,223.6 299.7,221.7 303.0,220.5C306.4,219.3 309.9,218.5 312.7,218.8C315.4,219.1 317.8,220.5 319.7,222.3C321.6,224.0 323.1,226.9 324.1,229.3C325.0,231.6 326.7,234.4 325.3,236.3C323.8,238.2 319.0,239.1 315.3,240.7C311.6,242.3 306.8,244.3 303.0,245.9C299.2,247.5 295.4,249.1 292.5,250.3C289.7,251.5 287.4,254.1 285.9,252.9Z" fill="url(#gTomW)" />
<ellipse cx="297" cy="231" rx="5" ry="3.2" transform="rotate(-30 297 231)" fill="#f79a72" opacity="0.55"/>
<ellipse cx="307" cy="227" rx="4.6" ry="3" transform="rotate(-10 307 227)" fill="#f79a72" opacity="0.55"/>
<ellipse cx="316" cy="229" rx="3.6" ry="2.6" transform="rotate(25 316 229)" fill="#f79a72" opacity="0.55"/>
<circle cx="295" cy="232" r="0.65" fill="#f8dc9a" opacity="0.9"/>
<circle cx="299" cy="230" r="0.65" fill="#f8dc9a" opacity="0.9"/>
<circle cx="305" cy="227" r="0.65" fill="#f8dc9a" opacity="0.9"/>
<circle cx="309" cy="228" r="0.65" fill="#f8dc9a" opacity="0.9"/>
<circle cx="315" cy="229" r="0.65" fill="#f8dc9a" opacity="0.9"/>
<circle cx="252.5" cy="248.9" r="9.8" fill="url(#gCar)"/>
<ellipse cx="332.3" cy="253.8" rx="9.3" ry="14.6" transform="rotate(22 332.3 253.8)" fill="url(#gYelC)"/>
<g transform="rotate(22 332.3 253.8)"><ellipse cx="332.3" cy="253.8" rx="6.7" ry="11.4" fill="#e8981c" opacity="0.75"/><ellipse cx="332.3" cy="253.8" rx="1.5" ry="10.2" fill="#f8cc4a" opacity="0.85"/><ellipse cx="328.4" cy="253.8" rx="1.3" ry="6.6" fill="#f6c040" opacity="0.6"/><ellipse cx="336.2" cy="253.8" rx="1.3" ry="6.6" fill="#f6c040" opacity="0.6"/></g>
<path d="M370.5,239 C384,238.4 393.6,249 393.8,260 C393.9,262.5 391.6,263.5 391.6,264.5 C391.6,265.5 393.8,266.5 393.6,269 C392.6,280 383,287.4 370.5,287 C357,286.6 347.2,276 347.2,263 C347.2,249.6 357,239.6 370.5,239Z" fill="url(#gTomB)"/>
<ellipse cx="363" cy="252" rx="4.2" ry="6.5" transform="rotate(-35 363 252)" fill="#f68a62" opacity="0.55"/>
<ellipse cx="377" cy="250" rx="4.2" ry="6.8" transform="rotate(25 377 250)" fill="#f68a62" opacity="0.55"/>
<ellipse cx="384" cy="258" rx="3.2" ry="5.5" transform="rotate(70 384 258)" fill="#f68a62" opacity="0.55"/>
<ellipse cx="359" cy="268" rx="4" ry="6.5" transform="rotate(35 359 268)" fill="#f68a62" opacity="0.55"/>
<ellipse cx="371" cy="276" rx="6.5" ry="3.8" transform="rotate(5 371 276)" fill="#f68a62" opacity="0.55"/>
<ellipse cx="383" cy="272" rx="3.6" ry="5.6" transform="rotate(-50 383 272)" fill="#f68a62" opacity="0.55"/>
<path d="M372,263 L392,264.6" stroke="#f4a070" stroke-width="1.2" opacity="0.7" fill="none"/>
<circle cx="362" cy="251" r="0.7" fill="#f8d48a" opacity="0.9"/>
<circle cx="365" cy="255" r="0.7" fill="#f8d48a" opacity="0.9"/>
<circle cx="376" cy="249" r="0.7" fill="#f8d48a" opacity="0.9"/>
<circle cx="379" cy="253" r="0.7" fill="#f8d48a" opacity="0.9"/>
<circle cx="384" cy="257" r="0.7" fill="#f8d48a" opacity="0.9"/>
<circle cx="360" cy="267" r="0.7" fill="#f8d48a" opacity="0.9"/>
<circle cx="362" cy="271" r="0.7" fill="#f8d48a" opacity="0.9"/>
<circle cx="369" cy="276" r="0.7" fill="#f8d48a" opacity="0.9"/>
<circle cx="374" cy="277" r="0.7" fill="#f8d48a" opacity="0.9"/>
<circle cx="382" cy="273" r="0.7" fill="#f8d48a" opacity="0.9"/>
<circle cx="384" cy="269" r="0.7" fill="#f8d48a" opacity="0.9"/>
<circle cx="421.7" cy="237.6" r="10.3" fill="url(#gCar)"/>
<path d="M443.0,260.7C442.1,259.8 440.6,255.7 439.9,253.3C439.3,250.8 439.1,248.5 439.3,245.8C439.5,243.2 440.4,240.1 441.2,237.2C442.0,234.3 443.0,231.0 444.3,228.5C445.5,226.1 446.8,224.1 448.6,222.4C450.3,220.6 452.6,219.0 454.8,218.0C456.9,217.1 459.3,216.6 461.6,216.8C463.8,217.0 466.2,218.2 468.4,219.3C470.5,220.3 472.5,221.5 474.6,223.0C476.6,224.4 478.9,226.4 480.7,227.9C482.6,229.5 484.3,231.0 485.7,232.2C487.0,233.5 488.7,234.4 488.8,235.3C488.9,236.3 487.1,237.6 486.3,237.8C485.5,238.0 485.0,237.5 483.8,236.6C482.7,235.6 481.0,233.6 479.5,232.2C478.0,230.9 476.0,229.5 474.6,228.5C473.1,227.6 472.1,227.5 470.8,226.7C469.6,225.9 468.7,224.5 467.1,223.6C465.6,222.7 463.4,221.4 461.6,221.1C459.7,220.8 457.8,221.0 456.0,221.7C454.3,222.5 452.5,223.8 451.1,225.5C449.6,227.1 448.3,229.5 447.4,231.6C446.4,233.8 445.5,237.0 445.5,238.4C445.5,239.9 447.6,239.0 447.4,240.3C447.2,241.5 444.8,243.9 444.3,245.8C443.7,247.8 443.7,249.9 443.9,252.0C444.1,254.2 445.7,257.4 445.5,258.8C445.4,260.3 444.0,261.6 443.0,260.7Z" fill="url(#gPepG)"  stroke="#5e9426" stroke-width="0.5" stroke-linejoin="round"/>
<path d="M442.7,257.0C442.5,255.3 441.7,250.4 441.8,247.1C441.9,243.8 442.6,240.2 443.4,237.2C444.2,234.2 445.4,231.5 446.7,229.2C448.1,226.8 449.7,224.6 451.7,223.0C453.6,221.4 456.3,220.1 458.5,219.6C460.6,219.2 462.6,219.7 464.7,220.5C466.7,221.3 468.8,222.9 470.8,224.2C472.9,225.6 475.0,226.9 477.0,228.5C479.1,230.2 482.2,233.2 483.2,234.1" fill="none" stroke="#a6c85a" stroke-width="1.4" stroke-linecap="round" stroke-linejoin="round"/>
<circle cx="507.1" cy="232.9" r="10.9" fill="url(#gChe)"/>
<path d="M501.65000000000003,233.99 L513.64,230.72 M507.1,226.36 L508.19,239.44" stroke="#f0a070" stroke-width="0.8" opacity="0.6" fill="none"/>
<circle cx="467.1" cy="250.4" r="13.9" fill="url(#gOniR)"/>
<circle cx="467.1" cy="250.4" r="11.1" fill="none" stroke="#e6d2de" stroke-width="0.5" opacity="0.4"/>
<circle cx="467.1" cy="250.4" r="8.3" fill="none" stroke="#e6d2de" stroke-width="0.5" opacity="0.4"/>
<circle cx="467.1" cy="250.4" r="5.6" fill="none" stroke="#e6d2de" stroke-width="0.5" opacity="0.4"/>
<circle cx="467.1" cy="250.4" r="3.1" fill="none" stroke="#e6d2de" stroke-width="0.5" opacity="0.4"/>
<path d="M246.8,276.7C247.4,275.1 249.5,273.2 250.8,271.6C252.1,269.9 253.1,268.3 254.7,267.0C256.4,265.7 258.3,264.8 260.4,263.6C262.5,262.4 265.7,261.0 267.2,259.6C268.7,258.3 268.2,256.0 269.5,255.7C270.8,255.4 273.3,257.1 275.2,257.9C277.1,258.8 278.8,259.9 280.8,260.8C282.9,261.6 285.6,262.0 287.7,263.0C289.7,264.1 291.6,265.5 293.3,267.0C295.0,268.5 296.3,270.4 297.9,272.1C299.4,273.8 302.6,275.7 302.4,277.2C302.2,278.7 298.6,280.2 296.7,281.2C294.8,282.2 292.2,282.1 291.1,283.5C289.9,284.9 290.6,287.3 289.9,289.7C289.3,292.1 288.2,295.9 287.1,297.7C285.9,299.4 284.7,300.3 283.1,300.5C281.5,300.7 279.5,299.3 277.4,298.8C275.4,298.3 272.4,298.6 270.6,297.7C268.8,296.7 268.0,294.6 266.7,293.1C265.3,291.6 264.3,289.9 262.7,288.6C261.1,287.3 259.0,286.1 257.0,285.2C255.0,284.2 252.4,283.7 250.8,282.9C249.2,282.1 248.0,281.7 247.4,280.6C246.7,279.6 246.2,278.2 246.8,276.7Z" fill="url(#gLetF)" filter="url(#leaf)" />
<path d="M305.8,261.5C306.7,261.2 309.3,261.1 310.2,262.3C311.0,263.5 310.2,266.7 310.9,268.8C311.6,270.8 313.2,273.3 314.5,274.5C315.8,275.7 317.6,275.6 318.8,276.0C320.0,276.3 321.5,275.6 321.7,276.7C321.9,277.8 320.6,280.7 320.3,282.5C319.9,284.3 319.1,285.7 319.5,287.5C320.0,289.3 321.5,291.4 323.1,293.3C324.8,295.2 327.3,297.7 329.6,299.1C331.9,300.4 334.4,301.2 336.8,301.2C339.3,301.2 341.9,300.1 344.1,299.1C346.2,298.0 348.6,296.2 349.8,294.7C351.0,293.3 351.5,291.5 351.3,290.4C351.0,289.3 348.3,289.0 348.4,288.2C348.5,287.5 350.6,285.5 352.0,286.1C353.4,286.7 356.6,289.8 357.0,291.8C357.5,293.9 356.3,296.2 354.9,298.3C353.4,300.5 350.9,303.3 348.4,304.8C345.9,306.4 342.6,307.4 339.7,307.7C336.8,308.1 334.0,307.7 331.1,307.0C328.2,306.3 324.8,305.0 322.4,303.4C320.0,301.8 318.2,299.8 316.6,297.6C315.1,295.5 313.8,292.8 313.0,290.4C312.3,288.0 313.0,285.4 312.3,283.2C311.6,281.0 309.8,279.6 308.7,277.4C307.6,275.3 306.4,272.4 305.8,270.2C305.2,268.0 305.1,265.9 305.1,264.4C305.1,263.0 305.0,261.9 305.8,261.5Z" fill="url(#gPepR)"  stroke="#d82218" stroke-width="0.9" stroke-linejoin="round"/>
<circle cx="335.5" cy="284.6" r="9.2" fill="url(#gCar)"/>
<path d="M398.4,263.9C399.6,260.7 402.2,258.0 404.9,256.5C407.5,255.0 410.9,254.8 414.1,254.6C417.4,254.5 421.4,254.5 424.3,255.6C427.3,256.7 429.5,259.4 431.8,261.1C434.1,262.8 436.4,264.2 438.3,265.8C440.1,267.3 442.5,268.1 442.9,270.4C443.4,272.7 441.2,276.6 441.1,279.7C440.9,282.8 442.3,285.9 442.0,289.0C441.7,292.1 440.3,295.2 439.2,298.3C438.1,301.4 436.7,304.9 435.5,307.6C434.3,310.2 433.5,313.4 431.8,314.1C430.1,314.7 427.6,312.7 425.3,311.3C423.0,309.9 420.3,307.2 417.8,305.7C415.4,304.2 412.9,303.5 410.4,302.0C407.9,300.4 404.9,298.9 403.0,296.4C401.1,293.9 400.2,290.5 399.3,287.1C398.4,283.7 397.6,279.9 397.4,276.0C397.3,272.1 397.1,267.2 398.4,263.9Z" fill="url(#gLetC)" filter="url(#leaf)" />
<ellipse cx="470.8" cy="277.9" rx="8.4" ry="8.4" transform="rotate(30 470.8 277.9)" fill="url(#gYelC)"/>
<g transform="rotate(30 470.8 277.9)"><ellipse cx="470.8" cy="277.9" rx="6.0" ry="6.6" fill="#e8981c" opacity="0.75"/><ellipse cx="470.8" cy="277.9" rx="1.3" ry="5.9" fill="#f8cc4a" opacity="0.85"/><ellipse cx="467.3" cy="277.9" rx="1.2" ry="3.8" fill="#f6c040" opacity="0.6"/><ellipse cx="474.3" cy="277.9" rx="1.2" ry="3.8" fill="#f6c040" opacity="0.6"/></g>
<ellipse cx="454.4" cy="295.9" rx="8.4" ry="8.4" transform="rotate(70 454.4 295.9)" fill="url(#gYelC)"/>
<g transform="rotate(70 454.4 295.9)"><ellipse cx="454.4" cy="295.9" rx="6.0" ry="6.6" fill="#e8981c" opacity="0.75"/><ellipse cx="454.4" cy="295.9" rx="1.3" ry="5.9" fill="#f8cc4a" opacity="0.85"/><ellipse cx="450.9" cy="295.9" rx="1.2" ry="3.8" fill="#f6c040" opacity="0.6"/><ellipse cx="457.9" cy="295.9" rx="1.2" ry="3.8" fill="#f6c040" opacity="0.6"/></g>
<path d="M480.0,268.6C480.5,267.0 483.5,265.2 484.7,263.0C485.9,260.8 485.9,257.4 487.5,255.6C489.0,253.7 492.0,252.0 494.0,251.9C496.0,251.7 498.3,253.2 499.5,254.6C500.8,256.0 500.5,260.4 501.4,260.2C502.3,260.1 503.6,255.3 505.1,253.7C506.7,252.2 508.5,250.9 510.7,250.9C512.8,250.9 516.3,252.2 518.1,253.7C520.0,255.3 521.7,257.9 521.8,260.2C522.0,262.5 520.3,265.3 519.0,267.6C517.8,270.0 515.8,271.8 514.4,274.1C513.0,276.5 511.6,278.9 510.7,281.6C509.8,284.2 509.9,288.8 508.8,289.9C507.7,291.0 505.7,289.1 504.2,288.1C502.6,287.0 501.4,284.8 499.5,283.4C497.7,282.0 495.2,280.9 493.0,279.7C490.9,278.5 488.4,277.2 486.5,276.0C484.7,274.8 483.0,273.5 481.9,272.3C480.8,271.0 479.6,270.1 480.0,268.6Z" fill="url(#gLetD2)" filter="url(#leafR)" />
<circle cx="251.8" cy="305.3" r="11.3" fill="url(#gChe)"/>
<path d="M246.15,306.43 L258.58,303.04 M251.8,298.52000000000004 L252.93,312.08" stroke="#f0a070" stroke-width="0.8" opacity="0.6" fill="none"/>
<path d="M270.6,323.8C270.6,321.5 275.0,316.7 277.1,313.6C279.3,310.5 280.8,305.8 283.6,305.2C286.4,304.6 290.1,308.0 293.8,309.8C297.5,311.7 304.7,314.2 305.9,316.3C307.1,318.5 303.3,321.0 301.3,322.8C299.2,324.7 296.5,326.2 293.8,327.5C291.2,328.7 288.3,330.3 285.5,330.3C282.7,330.3 279.6,328.6 277.1,327.5C274.6,326.4 270.6,326.1 270.6,323.8Z" fill="url(#gRad2)" />
<ellipse cx="252" cy="332.2" rx="7.6" ry="8" fill="url(#gOli)"/>
<circle cx="254.3" cy="334.2" r="2.9" fill="#c8582e"/>
<ellipse cx="377" cy="303" rx="8" ry="8.5" fill="url(#gOli)"/>
<circle cx="378.6" cy="305.1" r="3.1" fill="#c8582e"/>
<path d="M448.5,316.8C448.8,315.1 451.7,313.3 454.1,311.3C456.4,309.3 459.8,306.9 462.4,304.8C465.0,302.6 467.4,300.3 469.8,298.3C472.3,296.3 475.4,294.1 477.3,292.7C479.1,291.3 479.4,289.8 481.0,289.9C482.5,290.1 484.8,291.9 486.5,293.6C488.2,295.3 490.4,297.8 491.2,300.1C492.0,302.5 492.0,305.1 491.2,307.6C490.4,310.0 488.6,312.7 486.5,315.0C484.5,317.3 481.9,319.8 479.1,321.5C476.3,323.2 473.1,324.7 469.8,325.2C466.6,325.7 462.6,324.9 459.6,324.3C456.7,323.6 454.1,322.7 452.2,321.5C450.3,320.2 448.2,318.5 448.5,316.8Z" fill="url(#gTomW)" />
<ellipse cx="466" cy="309" rx="5.5" ry="3.2" transform="rotate(-35 466 309)" fill="#f79a72" opacity="0.55"/>
<ellipse cx="476" cy="301" rx="4.8" ry="3" transform="rotate(-35 476 301)" fill="#f79a72" opacity="0.55"/>
<ellipse cx="484" cy="296" rx="3.4" ry="2.4" transform="rotate(-20 484 296)" fill="#f79a72" opacity="0.55"/>
<circle cx="463" cy="311" r="0.65" fill="#f8dc9a" opacity="0.9"/>
<circle cx="467" cy="308" r="0.65" fill="#f8dc9a" opacity="0.9"/>
<circle cx="473" cy="303" r="0.65" fill="#f8dc9a" opacity="0.9"/>
<circle cx="477" cy="300" r="0.65" fill="#f8dc9a" opacity="0.9"/>
<circle cx="483" cy="296" r="0.65" fill="#f8dc9a" opacity="0.9"/>
<path d="M500.5,299.2C502.0,298.7 505.6,301.2 508.8,302.9C512.1,304.6 518.4,306.8 520.0,309.4C521.5,312.0 519.0,315.1 518.1,318.7C517.2,322.3 516.6,329.2 514.4,330.8C512.2,332.3 508.2,329.1 505.1,328.0C502.0,326.9 498.5,325.3 495.8,324.3C493.2,323.2 490.1,322.9 489.3,321.5C488.6,320.1 490.0,317.5 491.2,315.9C492.4,314.4 495.4,313.9 496.8,312.2C498.2,310.5 498.9,307.9 499.5,305.7C500.2,303.5 498.9,299.7 500.5,299.2Z" fill="url(#gRad2)" />
<path d="M315.1,341.0C315.1,338.9 317.5,334.0 318.9,331.7C320.3,329.4 322.0,327.2 323.6,327.1C325.1,327.0 327.2,331.9 328.2,330.9C329.2,330.0 329.1,324.5 329.8,321.7C330.4,318.8 330.7,315.1 332.1,313.9C333.5,312.8 337.2,313.2 338.3,314.7C339.3,316.2 337.2,321.4 338.3,323.2C339.3,325.0 342.5,326.0 344.5,325.5C346.4,325.0 348.7,322.2 349.9,320.1C351.0,318.1 350.0,314.2 351.4,313.2C352.8,312.1 356.2,312.8 358.4,313.9C360.6,315.1 363.9,317.9 364.6,320.1C365.2,322.3 363.0,324.5 362.3,327.1C361.5,329.7 359.4,333.0 359.9,335.6C360.4,338.2 365.2,340.7 365.3,342.6C365.5,344.4 360.4,344.7 360.7,346.4C361.0,348.1 366.8,351.1 366.9,352.6C367.0,354.2 363.3,354.3 361.5,355.7C359.7,357.1 358.0,359.6 356.1,361.1C354.1,362.7 352.2,364.5 349.9,365.0C347.6,365.5 344.3,364.9 342.1,364.2C339.9,363.6 338.8,362.3 336.7,361.1C334.7,360.0 331.8,358.5 329.8,357.3C327.7,356.0 325.9,354.7 324.3,353.4C322.8,352.1 320.3,350.7 320.5,349.5C320.6,348.4 325.4,347.3 325.1,346.4C324.9,345.5 320.6,345.0 318.9,344.1C317.3,343.2 315.1,343.1 315.1,341.0Z" fill="url(#gLetD)" filter="url(#leafR)" />
<circle cx="408.6" cy="329.8" r="16" fill="url(#gCuc)"/>
<circle cx="388.2" cy="337.2" r="17.8" fill="url(#gCuc)"/>
<circle cx="440.9" cy="331.8" r="11.7" fill="url(#gChe)"/>
<path d="M435.04999999999995,332.97 L447.91999999999996,329.46000000000004 M440.9,324.78000000000003 L442.07,338.82" stroke="#f0a070" stroke-width="0.8" opacity="0.6" fill="none"/>
<path d="M247.4,355.3C249.4,354.4 261.4,349.6 264.1,348.3C266.8,346.9 269.2,344.9 270.6,343.6C272.0,342.4 274.9,338.0 276.2,337.7C277.5,337.4 280.2,340.8 281.8,341.0C283.3,341.2 287.6,339.8 289.2,339.5C290.8,339.3 294.1,339.2 295.7,338.6C297.3,338.1 302.7,334.5 303.1,334.9C303.5,335.3 300.7,341.0 299.4,342.3C298.1,343.6 293.5,345.5 292.0,346.0C290.5,346.6 286.5,346.3 286.4,347.0C286.3,347.6 291.4,351.3 291.0,351.6C290.7,351.9 285.2,350.1 283.6,349.8C282.0,349.4 278.3,348.2 277.1,348.8C275.9,349.5 274.3,355.1 273.4,355.3C272.5,355.5 271.0,351.1 269.7,350.7C268.4,350.3 264.2,351.3 262.3,351.8C260.3,352.3 254.7,354.1 253.0,354.6C251.3,355.1 248.1,356.0 247.4,356.1C246.8,356.2 245.5,356.2 247.4,355.3Z" fill="url(#gAru2)"/>
<path d="M245.6,375.2C247.5,374.9 258.8,373.9 262.3,373.3C265.7,372.7 272.9,371.1 275.3,370.2C277.6,369.3 281.0,366.6 282.7,365.5C284.4,364.5 288.4,361.8 290.1,360.9C291.8,360.0 295.6,358.5 297.5,358.1C299.5,357.7 304.9,357.2 306.8,357.2C308.8,357.2 313.8,357.4 314.2,358.1C314.7,358.9 311.6,362.5 310.5,363.7C309.5,364.9 306.7,367.6 305.0,368.3C303.2,369.1 297.4,369.4 295.7,370.2C294.0,370.9 291.3,374.6 290.1,374.8C288.9,375.0 287.0,372.3 285.5,372.0C284.0,371.8 279.8,372.2 277.1,372.6C274.4,373.0 266.0,374.8 262.3,375.2C258.6,375.6 247.5,375.9 245.6,375.9C243.6,375.9 243.6,375.5 245.6,375.2Z" fill="url(#gAru2)"/>
<circle cx="325.8" cy="374.2" r="9.6" fill="url(#gCar)"/>
<ellipse cx="364.7" cy="378.6" rx="8.8" ry="9.1" fill="rgba(255,255,255,0.28)" stroke="#f4edf0" stroke-width="2.6"/>
<ellipse cx="364.7" cy="378.75" rx="10.450000000000001" ry="10.799999999999999" fill="none" stroke="#a25c86" stroke-width="1.2"/>
<path d="M356.8,385.5 A10.3,10.6 0 0 0 373.1,384.7" fill="none" stroke="#8c466e" stroke-width="1.5" stroke-linecap="round" opacity="0.8"/>
<circle cx="256.3" cy="398.5" r="15.4" fill="url(#gOniR)"/>
<circle cx="256.3" cy="398.5" r="12.3" fill="none" stroke="#e6d2de" stroke-width="0.5" opacity="0.4"/>
<circle cx="256.3" cy="398.5" r="9.2" fill="none" stroke="#e6d2de" stroke-width="0.5" opacity="0.4"/>
<circle cx="256.3" cy="398.5" r="6.2" fill="none" stroke="#e6d2de" stroke-width="0.5" opacity="0.4"/>
<circle cx="256.3" cy="398.5" r="3.4" fill="none" stroke="#e6d2de" stroke-width="0.5" opacity="0.4"/>
<radialGradient id="gCh4" gradientUnits="userSpaceOnUse" cx="290.3" cy="378.6" r="18.7"><stop offset="0" stop-color="#f1edb6"/><stop offset="0.6" stop-color="#ebe6a4"/><stop offset="0.84" stop-color="#e0de98"/><stop offset="0.89" stop-color="#8ab048"/><stop offset="0.94" stop-color="#3f7f26"/><stop offset="1" stop-color="#2a641a"/></radialGradient>
<path d="M277.3,392.0 A18.7,18.7 0 0 0 308.8,376.2Z" fill="url(#gCh4)"/>
<radialGradient id="gCh5" gradientUnits="userSpaceOnUse" cx="295.5" cy="395.4" r="17.9"><stop offset="0" stop-color="#f1edb6"/><stop offset="0.6" stop-color="#ebe6a4"/><stop offset="0.84" stop-color="#e0de98"/><stop offset="0.89" stop-color="#8ab048"/><stop offset="0.94" stop-color="#3f7f26"/><stop offset="1" stop-color="#2a641a"/></radialGradient>
<path d="M277.7,396.8 A17.9,17.9 0 0 0 313.4,395.8Z" fill="url(#gCh5)"/>
<path d="M318.9,392.3C319.7,390.7 320.3,389.9 323.3,389.4C326.3,388.9 332.2,389.3 336.6,389.4C341.0,389.5 346.9,389.3 349.9,390.1C352.8,391.0 353.3,392.3 354.3,394.5C355.3,396.8 355.6,399.8 355.8,403.4C356.0,407.0 358.5,413.8 355.8,416.0C353.1,418.2 344.7,416.7 339.5,416.7C334.4,416.7 327.9,417.4 324.8,416.0C321.7,414.5 322.2,410.7 321.1,407.8C320.0,405.0 318.5,401.6 318.1,399.0C317.8,396.4 318.0,393.9 318.9,392.3Z" fill="url(#gRadB)" />
<ellipse cx="376.6" cy="407.4" rx="14.7" ry="8.6" transform="rotate(-4 376.6 407.4)" fill="url(#gYel)"/>
<path d="M377.2,365.0C378.2,366.0 382.2,371.3 383.9,373.1C385.5,375.0 387.8,377.8 389.8,379.0C391.7,380.3 396.3,381.4 398.6,382.7C401.0,384.0 405.2,386.9 407.5,388.6C409.8,390.4 413.7,393.8 415.6,396.0C417.6,398.3 420.7,403.1 422.3,405.6C423.9,408.2 427.5,414.0 427.7,415.2C427.9,416.4 425.3,415.1 423.8,414.5C422.2,413.9 418.3,411.9 416.4,410.8C414.4,409.7 410.9,407.5 409.0,406.4C407.1,405.2 403.9,403.0 402.3,401.9C400.8,400.8 398.1,399.3 397.2,398.2C396.2,397.2 395.6,395.5 394.9,393.8C394.3,392.1 392.9,387.6 392.0,385.7C391.1,383.8 389.6,381.4 388.3,379.8C387.0,378.1 384.0,375.0 382.4,373.1C380.8,371.2 377.2,366.5 376.5,365.4C375.8,364.4 376.2,364.0 377.2,365.0Z" fill="url(#gAru2)"/>
<path d="M377.4,365.4 L427.5,415" stroke="#a4cc70" stroke-width="0.6" fill="none"/>
<path d="M427.4,349.8C429.9,349.7 432.9,351.5 435.4,351.5C437.8,351.6 439.6,349.9 441.8,350.1C444.1,350.3 446.9,351.4 449.1,353.0C451.2,354.6 453.0,357.1 454.8,359.5C456.6,361.9 458.6,364.7 459.9,367.4C461.2,370.2 462.3,373.2 462.8,376.1C463.3,379.0 463.4,382.0 462.8,384.7C462.2,387.5 460.7,390.5 459.2,392.7C457.6,394.8 455.8,396.5 453.4,397.7C451.0,398.9 447.6,399.8 444.7,399.9C441.8,400.0 438.7,399.2 436.1,398.4C433.4,397.7 431.3,396.9 428.9,395.6C426.5,394.2 423.8,392.3 421.6,390.5C419.5,388.7 417.6,386.8 415.9,384.7C414.2,382.7 412.4,380.3 411.5,378.2C410.7,376.2 410.6,374.2 410.8,372.5C411.1,370.8 412.9,369.7 413.0,368.1C413.1,366.6 411.3,364.9 411.5,363.1C411.8,361.3 413.0,359.1 414.4,357.3C415.9,355.5 418.0,353.5 420.2,352.3C422.4,351.0 424.9,349.9 427.4,349.8Z M426.7,355.2C428.3,355.3 430.1,356.8 431.0,358.0C432.0,359.2 431.5,362.5 432.5,362.4C433.4,362.2 435.0,358.5 436.8,357.3C438.6,356.1 441.2,354.9 443.3,355.2C445.3,355.4 447.3,357.0 449.1,358.8C450.9,360.6 452.7,363.3 454.1,366.0C455.6,368.6 457.1,372.1 457.7,374.6C458.3,377.2 458.1,379.7 457.7,381.1C457.4,382.6 456.9,383.2 455.6,383.3C454.2,383.4 451.6,382.4 449.8,381.8C448.0,381.2 446.1,379.3 444.7,379.7C443.4,380.0 441.7,382.7 441.8,384.0C442.0,385.3 444.7,386.2 445.5,387.6C446.2,389.1 446.8,391.3 446.2,392.7C445.6,394.0 443.5,395.3 441.8,395.6C440.2,395.8 438.2,395.0 436.1,394.1C433.9,393.3 431.0,391.9 428.9,390.5C426.7,389.1 424.8,387.3 423.1,385.5C421.4,383.7 419.6,381.4 418.8,379.7C417.9,378.0 417.6,376.8 418.0,375.4C418.5,373.9 421.4,372.6 421.6,371.0C421.9,369.5 420.1,367.5 419.5,366.0C418.9,364.4 417.7,363.1 418.0,361.6C418.4,360.2 420.2,358.4 421.6,357.3C423.1,356.2 425.1,355.0 426.7,355.2Z" fill="url(#gPepY)" fill-rule="evenodd" stroke="#f6c818" stroke-width="0.7" stroke-linejoin="round"/>
<ellipse cx="449.6" cy="386" rx="4.6" ry="3.4" transform="rotate(35 449.6 386)" fill="#eea016" opacity="0.5"/>
<path d="M414,365 Q414,382 428,392" stroke="#fde868" stroke-width="1.1" fill="none" opacity="0.6" stroke-linecap="round"/>
<path d="M462.2,360.4C461.7,358.9 462.6,355.8 463.7,353.9C464.7,351.9 467.0,350.1 468.7,348.8C470.4,347.5 472.1,347.5 473.8,345.9C475.4,344.4 476.8,341.1 478.8,339.4C480.9,337.7 483.3,336.7 486.0,335.8C488.8,335.0 492.4,334.4 495.4,334.4C498.4,334.4 501.3,335.0 504.1,335.8C506.8,336.7 509.8,337.9 512.0,339.4C514.2,341.0 515.7,343.0 517.0,345.2C518.4,347.4 519.3,349.8 519.9,352.4C520.5,355.1 521.4,359.0 520.7,361.1C519.9,363.1 517.3,364.1 515.6,364.7C513.9,365.3 511.2,365.6 510.6,364.7C510.0,363.7 511.6,360.8 512.0,358.9C512.4,357.0 513.2,355.2 512.7,353.1C512.2,351.1 510.8,348.4 509.1,346.6C507.4,344.8 505.0,343.4 502.6,342.3C500.2,341.2 497.2,340.3 494.7,340.2C492.2,340.0 489.4,340.8 487.5,341.6C485.5,342.4 484.0,343.8 483.1,345.2C482.3,346.6 483.1,348.8 482.4,350.3C481.7,351.7 480.0,353.6 478.8,353.9C477.6,354.1 476.5,351.7 475.2,351.7C473.9,351.7 472.1,352.7 470.9,353.9C469.7,355.1 468.7,357.5 468.0,358.9C467.3,360.4 467.5,362.3 466.5,362.5C465.6,362.8 462.7,361.8 462.2,360.4Z" fill="url(#gPepR)"  stroke="#d82218" stroke-width="0.9" stroke-linejoin="round"/>
<circle cx="496.6" cy="358.6" r="9.8" fill="url(#gCar)"/>
<path d="M466.8,397.2C466.8,395.7 468.5,392.0 469.9,389.8C471.2,387.5 473.2,385.3 474.8,383.6C476.5,381.8 477.9,380.5 479.8,379.2C481.6,378.0 483.9,376.6 485.9,376.1C488.0,375.7 490.1,376.9 492.1,376.8C494.2,376.7 496.3,375.2 498.3,375.5C500.4,375.8 502.4,378.2 504.5,378.6C506.6,379.0 508.6,377.7 510.7,378.0C512.8,378.3 515.4,379.3 516.9,380.5C518.3,381.6 519.6,383.3 519.4,384.8C519.2,386.3 516.2,388.1 515.6,389.8C515.1,391.4 516.9,393.1 516.3,394.7C515.6,396.4 513.0,397.8 511.9,399.7C510.9,401.5 510.9,403.6 510.1,405.8C509.2,408.1 508.3,411.3 507.0,413.3C505.6,415.2 503.9,416.8 502.0,417.6C500.2,418.4 497.7,418.7 495.8,418.2C494.0,417.7 492.4,416.2 490.9,414.5C489.3,412.9 488.2,410.4 486.6,408.3C484.9,406.3 482.8,403.9 481.0,402.1C479.1,400.4 477.3,398.4 475.4,397.8C473.6,397.2 471.3,398.5 469.9,398.4C468.4,398.3 466.8,398.6 466.8,397.2Z" fill="url(#gLetO)" filter="url(#leaf)" />
<circle cx="6.4" cy="5.9" r="3.1" fill="#f0564a"/>
<circle cx="6.4" cy="5.9" r="1.1" fill="#8a1a10" opacity="0.75"/>
<circle cx="15.5" cy="5.9" r="3.1" fill="#f5b428"/>
<circle cx="15.5" cy="5.9" r="1.1" fill="#8a5a00" opacity="0.75"/>
<circle cx="24.6" cy="5.9" r="3.1" fill="#3cc43a"/>
<circle cx="24.6" cy="5.9" r="1.1" fill="#0c5a10" opacity="0.75"/>
<circle cx="12.2" cy="17.2" r="2.9" fill="none" stroke="#dcdcdc" stroke-width="1.1"/>
<path d="M14.375,19.375 L17.71,22.71" stroke="#dcdcdc" stroke-width="1.54" fill="none" stroke-linecap="round" stroke-linejoin="round" />
<path d="M20.9,18.35 L22.2,19.65 L23.5,18.35" stroke="#bbb" stroke-width="0.7" fill="none" stroke-linecap="round" stroke-linejoin="round" />
<circle cx="36.3" cy="17.3" r="2.5" fill="none" stroke="#dcdcdc" stroke-width="0.8"/>
<path d="M38.175,19.175 L41.05,22.05" stroke="#dcdcdc" stroke-width="1.1199999999999999" fill="none" stroke-linecap="round" stroke-linejoin="round" />
<path d="M35.099999999999994,17.3 h2.4 M36.3,16.1 v2.4" stroke="#dcdcdc" stroke-width="0.6" fill="none" stroke-linecap="round" stroke-linejoin="round" />
<circle cx="48.2" cy="17.3" r="2.5" fill="none" stroke="#dcdcdc" stroke-width="0.8"/>
<path d="M50.075,19.175 L52.95,22.05" stroke="#dcdcdc" stroke-width="1.1199999999999999" fill="none" stroke-linecap="round" stroke-linejoin="round" />
<path d="M47.0,17.3 h2.4" stroke="#dcdcdc" stroke-width="0.6" fill="none" stroke-linecap="round" stroke-linejoin="round" />
<path d="M59.4,17.9 L60.5,19.1 L62.4,16.4" stroke="#222" stroke-width="0.8" fill="none" stroke-linecap="round" stroke-linejoin="round" />
<circle cx="837" cy="17" r="2.4" fill="none" stroke="#dcdcdc" stroke-width="0.9"/>
<path d="M835.3,18.8 L833.2,21" stroke="#dcdcdc" stroke-width="1.2" fill="none" stroke-linecap="round" stroke-linejoin="round" />
<rect x="846.2" y="15" width="7.2" height="6" rx="0.6" fill="none" stroke="#dcdcdc" stroke-width="0.9"/>
<rect x="846.4" y="15.2" width="2.2" height="5.6" fill="#dcdcdc"/>
<path d="M858.7,17.950000000000003 L860,19.25 L861.3,17.950000000000003" stroke="#bbb" stroke-width="0.7" fill="none" stroke-linecap="round" stroke-linejoin="round" />
<rect x="868" y="16.6" width="6.4" height="4.8" rx="0.6" fill="none" stroke="#dcdcdc" stroke-width="0.9"/>
<path d="M871.2,18.6 V14 M869.7,15.4 L871.2,13.8 L872.7,15.4" stroke="#dcdcdc" stroke-width="0.9" fill="none" stroke-linecap="round" stroke-linejoin="round" />
<path d="M871.2,18.6 V14" stroke="#dcdcdc" stroke-width="0.9" fill="none" stroke-linecap="round" stroke-linejoin="round" />
<path d="M22.3,30.9 l2.4,2.4 M24.7,30.9 l-2.4,2.4" stroke="#bdbdbd" stroke-width="0.5" fill="none" stroke-linecap="round" stroke-linejoin="round" />
<path d="M3,27.8 l1,1 l-1,1 M4.7,27.8 l1,1 l-1,1" stroke="#aaa" stroke-width="0.4" fill="none" stroke-linecap="round" stroke-linejoin="round" />
<path d="M762.6,27.8 l1,1 l-1,1 M764.3,27.8 l1,1 l-1,1" stroke="#aaa" stroke-width="0.4" fill="none" stroke-linecap="round" stroke-linejoin="round" />
<path d="M873,27.8 l1,1 l-1,1 M874.7,27.8 l1,1 l-1,1" stroke="#aaa" stroke-width="0.4" fill="none" stroke-linecap="round" stroke-linejoin="round" />
<path d="M14.2,48.6 v1.4 h-1.4 Z" fill="#bbb"/>
<path d="M14.2,59.800000000000004 v1.4 h-1.4 Z" fill="#bbb"/>
<path d="M14.2,72.2 v1.4 h-1.4 Z" fill="#bbb"/>
<path d="M14.2,83.9 v1.4 h-1.4 Z" fill="#bbb"/>
<path d="M14.2,95.7 v1.4 h-1.4 Z" fill="#bbb"/>
<path d="M14.2,107.60000000000001 v1.4 h-1.4 Z" fill="#bbb"/>
<path d="M14.2,119.2 v1.4 h-1.4 Z" fill="#bbb"/>
<path d="M14.2,131.6 v1.4 h-1.4 Z" fill="#bbb"/>
<path d="M14.2,143.89999999999998 v1.4 h-1.4 Z" fill="#bbb"/>
<path d="M14.2,155.7 v1.4 h-1.4 Z" fill="#bbb"/>
<path d="M14.2,168.0 v1.4 h-1.4 Z" fill="#bbb"/>
<path d="M14.2,179.39999999999998 v1.4 h-1.4 Z" fill="#bbb"/>
<path d="M14.2,191.2 v1.4 h-1.4 Z" fill="#bbb"/>
<path d="M14.2,203.2 v1.4 h-1.4 Z" fill="#bbb"/>
<path d="M14.2,215.6 v1.4 h-1.4 Z" fill="#bbb"/>
<path d="M14.2,227.39999999999998 v1.4 h-1.4 Z" fill="#bbb"/>
<path d="M14.2,239.2 v1.4 h-1.4 Z" fill="#bbb"/>
<path d="M14.2,251.2 v1.4 h-1.4 Z" fill="#bbb"/>
<path d="M14.2,263.2 v1.4 h-1.4 Z" fill="#bbb"/>
<path d="M8.4,42.6 V48.199999999999996 M5.6000000000000005,45.4 H11.2" stroke="#dcdcdc" stroke-width="1.0" fill="none" stroke-linecap="round" stroke-linejoin="round" />
<path d="M8.4,41.5 l1.5,1.7 h-3Z M8.4,49.3 l1.5,-1.7 h-3Z M4.5,45.4 l1.7,-1.5 v3Z M12.3,45.4 l-1.7,-1.5 v3Z" fill="#dcdcdc"/>
<rect x="4.4" y="53.2" width="8" height="6.8" fill="none" stroke="#dcdcdc" stroke-width="0.9" stroke-dasharray="1.5 1"/>
<ellipse cx="8.700000000000001" cy="68.2" rx="3.8" ry="2.5" transform="rotate(-15 8.4 69)" fill="none" stroke="#dcdcdc" stroke-width="0.9"/>
<path d="M5.800000000000001,70 q-0.8,1.4 0.3,2.2 q0.9,0.5 0.2,1.4" stroke="#dcdcdc" stroke-width="0.8" fill="none" stroke-linecap="round" stroke-linejoin="round" />
<path d="M5.0,84.3 L9.4,79.9" stroke="#dcdcdc" stroke-width="1.4" fill="none" stroke-linecap="round" stroke-linejoin="round" />
<path d="M11.0,76.9 v1.4 M10.3,77.60000000000001 h1.4 M12.2,79.5 v1 M11.7,80.0 h1 M8.6,77.10000000000001 v0.8" stroke="#dcdcdc" stroke-width="0.5" fill="none" stroke-linecap="round" stroke-linejoin="round" />
<path d="M6.2,88.3 V94.7 H12.600000000000001 M4.2,90.3 H10.600000000000001 V96.7" stroke="#dcdcdc" stroke-width="1.1" fill="none" stroke-linecap="round" stroke-linejoin="round" />
<path d="M4.800000000000001,108.0 L9.0,103.80000000000001" stroke="#dcdcdc" stroke-width="1.3" fill="none" stroke-linecap="round" stroke-linejoin="round" />
<path d="M8.8,102.4 L10.4,104.0" stroke="#dcdcdc" stroke-width="1.6" fill="none" stroke-linecap="round" stroke-linejoin="round" />
<path d="M10.0,102.80000000000001 L11.4,101.4" stroke="#dcdcdc" stroke-width="2.0" fill="none" stroke-linecap="round" stroke-linejoin="round" />
<rect x="4.0" y="114" width="8.8" height="4" rx="1.6" transform="rotate(-40 8.4 116)" fill="#dcdcdc"/>
<rect x="7.1000000000000005" y="114.7" width="2.6" height="2.6" transform="rotate(-40 8.4 116)" fill="#4a4a4a" opacity="0.7"/>
<path d="M12.0,124.60000000000001 L7.800000000000001,129.0" stroke="#dcdcdc" stroke-width="1.3" fill="none" stroke-linecap="round" stroke-linejoin="round" />
<path d="M7.4,128.6 q1.6,0.6 1,2 q-1.4,2 -4,1.6 q1.4,-0.6 1.4,-2 q0.2,-1.6 1.6,-1.6Z" fill="#dcdcdc"/>
<path d="M7.1000000000000005,136.89999999999998 h2.6 q0.6,1.4 -0.5,2.8 v0.9 h3 v1.8 h-7.6 v-1.8 h3 v-0.9 q-1.1,-1.4 -0.5,-2.8Z" fill="#dcdcdc"/>
<path d="M4.6000000000000005,144.1 h7.6" stroke="#dcdcdc" stroke-width="0.8" fill="none" stroke-linecap="round" stroke-linejoin="round" />
<path d="M12.2,148.7 L8.6,152.5" stroke="#dcdcdc" stroke-width="1.2" fill="none" stroke-linecap="round" stroke-linejoin="round" />
<path d="M8.200000000000001,152.1 q1.6,0.6 1,2 q-1.4,2 -3.6,1.8 q1.2,-0.8 1.2,-2.2 q0.2,-1.4 1.4,-1.6Z" fill="#dcdcdc"/>
<path d="M4.6000000000000005,151.9 a2.6,2.6 0 0 1 3.4,-2.6 M7.0,148.3 l1.2,1 l-1.2,1" stroke="#dcdcdc" stroke-width="0.6" fill="none" stroke-linecap="round" stroke-linejoin="round" />
<path d="M7.6000000000000005,161.4 l4,2.2 l-3,4.2 h-3 l-1.6,-1.6Z" fill="#dcdcdc"/>
<path d="M4.6000000000000005,168.20000000000002 h6" stroke="#dcdcdc" stroke-width="0.7" fill="none" stroke-linecap="round" stroke-linejoin="round" />
<path d="M7.800000000000001,173.2 l3.6,3.2 l-3.4,3.4 l-3.4,-3Z" fill="none" stroke="#dcdcdc" stroke-width="0.9"/>
<path d="M5.2,176.79999999999998 l5.8,-0.2 l-2.8,2.8Z" fill="#dcdcdc"/>
<path d="M12.0,176.79999999999998 q1.2,1.8 0,2.4 q-1.2,-0.6 0,-2.4Z" fill="#dcdcdc"/>
<path d="M7.2,174.0 v-1.8" stroke="#dcdcdc" stroke-width="0.7" fill="none" stroke-linecap="round" stroke-linejoin="round" />
<path d="M8.4,184 q3.2,3.8 3,5.4 a3,3 0 0 1 -6,0 q-0.2,-1.6 3,-5.4Z" fill="#dcdcdc"/>
<circle cx="9.200000000000001" cy="198.8" r="2.6" fill="#dcdcdc"/>
<path d="M7.4,200.8 L5.0,203.6" stroke="#dcdcdc" stroke-width="1.4" fill="none" stroke-linecap="round" stroke-linejoin="round" />
<path d="M8.8,208.4 l3.2,3 l-2.2,3.4 l-4.6,1.6 l1.6,-4.8Z" fill="none" stroke="#dcdcdc" stroke-width="0.9"/>
<circle cx="8.6" cy="212.20000000000002" r="0.8" fill="#dcdcdc"/>
<path d="M5.2,216.4 L8.200000000000001,212.8" stroke="#dcdcdc" stroke-width="0.6" fill="none" stroke-linecap="round" stroke-linejoin="round" />
<path d="M6.0,232 L11.4,237 h-2.6 l1.4,3 l-1.3,0.6 l-1.4,-3 l-1.8,1.8Z" fill="#dcdcdc" stroke="#333" stroke-width="0.3"/>
<rect x="4.2" y="244.8" width="8.4" height="6.4" rx="0.6" fill="#707070" stroke="#dcdcdc" stroke-width="0.9"/>
<path d="M5.800000000000001,264 q-1.6,-2.2 -2.2,-3.4 q0.4,-1 1.6,0 l0.6,0.6 v-3.6 q0.6,-0.8 1.2,0 v-1 q0.7,-0.8 1.4,0 v0.6 q0.7,-0.7 1.4,0 v1 q0.7,-0.6 1.3,0.1 v3.8 q0,1.6 -1,2.9Z" fill="#dcdcdc"/>
<circle cx="7.5" cy="270.6" r="2.5" fill="none" stroke="#dcdcdc" stroke-width="1.0"/>
<path d="M9.375,272.475 L12.25,275.35" stroke="#dcdcdc" stroke-width="1.4" fill="none" stroke-linecap="round" stroke-linejoin="round" />
<circle cx="5.800000000000001" cy="283.7" r="0.85" fill="#dcdcdc"/>
<circle cx="8.4" cy="283.7" r="0.85" fill="#dcdcdc"/>
<circle cx="11.0" cy="283.7" r="0.85" fill="#dcdcdc"/>
<rect x="1.6" y="292.6" width="3" height="3" fill="#eee"/><rect x="3.4" y="294.4" width="3" height="3" fill="#222" stroke="#ddd" stroke-width="0.5"/>
<path d="M10.8,293.4 h2.6 v2.6 M11.8,292.4 l-1,1 l1,1 M12.4,295 l1,1 l1,-1" stroke="#dcdcdc" stroke-width="0.55" fill="none" stroke-linecap="round" stroke-linejoin="round" />
<rect x="6.6" y="304.6" width="8.6" height="8.6" fill="#ee1579" stroke="#3a3a3a" stroke-width="0.6"/>
<rect x="1.6" y="299.6" width="8.8" height="8.8" fill="#f4f4f4" stroke="#3a3a3a" stroke-width="0.6"/>
<rect x="4.2" y="317.8" width="8.2" height="6.4" rx="0.6" fill="none" stroke="#dcdcdc" stroke-width="0.9"/>
<circle cx="8.3" cy="321" r="1.7" fill="none" stroke="#dcdcdc" stroke-width="0.6" stroke-dasharray="0.9 0.6"/>
<rect x="6" y="329.6" width="6.6" height="4.6" rx="0.5" fill="#4a4a4a" stroke="#dcdcdc" stroke-width="0.8"/>
<rect x="4" y="331.8" width="6.6" height="4.6" rx="0.5" fill="#4a4a4a" stroke="#dcdcdc" stroke-width="0.8"/>
<path d="M14.2,336.2 v1.4 h-1.4 Z" fill="#bbb"/>
<path d="M125.8,479.4 l1.5,1.8 l-1.5,1.8" stroke="#ccc" stroke-width="0.55" fill="none" stroke-linecap="round" stroke-linejoin="round" />
<rect x="757" y="38.6" width="2.4" height="6.8" rx="0.5" fill="#dcdcdc"/>
<rect x="757.5" y="40" width="1.4" height="1" fill="#474747"/><rect x="757.5" y="41.8" width="1.4" height="1" fill="#474747"/>
<path d="M761.2,39.2 q2.6,0.4 2.2,3 q-0.4,1.8 -2.2,2.2 M760.6,38.4 l1,0.9 l-1.1,0.9" stroke="#dcdcdc" stroke-width="0.7" fill="none" stroke-linecap="round" stroke-linejoin="round" />
<path d="M757.4,52.6 l6.2,3 l-6.2,3Z" fill="#dcdcdc"/>
<path d="M763.2,70.4 v7.6" stroke="#dcdcdc" stroke-width="0.6" fill="none" stroke-linecap="round" stroke-linejoin="round" />
<circle cx="758.6" cy="102.6" r="1.7" fill="none" stroke="#dcdcdc" stroke-width="0.7"/>
<path d="M761.6,101 v3 M760.6,102.6 h2.4" stroke="#dcdcdc" stroke-width="0.6" fill="none" stroke-linecap="round" stroke-linejoin="round" />
<rect x="756.4" y="105.6" width="7.2" height="1.6" fill="#dcdcdc"/>
<path d="M871.6,36.9 h3.6 M871.6,38.1 h3.6 M871.6,39.3 h3.6" stroke="#bbb" stroke-width="0.45" fill="none" stroke-linecap="round" stroke-linejoin="round" />
<defs>
<linearGradient id="pkH" x1="0" y1="0" x2="1" y2="0"><stop offset="0" stop-color="#fff"/><stop offset="1" stop-color="#fb0cee"/></linearGradient>
<linearGradient id="pkV" x1="0" y1="0" x2="0" y2="1"><stop offset="0" stop-color="#000" stop-opacity="0"/><stop offset="1" stop-color="#000"/></linearGradient>
<linearGradient id="hue" x1="0" y1="0" x2="0" y2="1"><stop offset="0" stop-color="#f00"/><stop offset="0.1667" stop-color="#f0f"/><stop offset="0.3333" stop-color="#00f"/><stop offset="0.5" stop-color="#0ff"/><stop offset="0.6667" stop-color="#0f0"/><stop offset="0.8333" stop-color="#ff0"/><stop offset="1" stop-color="#f00"/></linearGradient>
</defs>
<rect x="790.5" y="47" width="65.7" height="132" fill="url(#pkH)"/>
<rect x="790.5" y="47" width="65.7" height="132" fill="url(#pkV)"/>
<rect x="863.4" y="47" width="8.8" height="132" fill="url(#hue)"/>
<circle cx="791.6" cy="53.6" r="1.6" fill="none" stroke="#222" stroke-width="0.6"/>
<circle cx="791.6" cy="53.6" r="1.1" fill="none" stroke="#eee" stroke-width="0.4"/>
<path d="M859.2,65 l2.4,1.6 l-2.4,1.6Z" fill="#eee"/>
<rect x="779" y="54.8" width="7.8" height="7.6" fill="#ee1579" stroke="#3d3d3d" stroke-width="0.5"/>
<rect x="774.6" y="49.6" width="8" height="7.9" fill="#efefef" stroke="#fff" stroke-width="0.6"/>
<path d="M872.6,188.2 h3.6 M872.6,189.4 h3.6 M872.6,190.6 h3.6" stroke="#bbb" stroke-width="0.45" fill="none" stroke-linecap="round" stroke-linejoin="round" />
<path d="M844.3000000000001,203.54999999999998 L845.6,204.85 L846.9,203.54999999999998" stroke="#ccc" stroke-width="0.7" fill="none" stroke-linecap="round" stroke-linejoin="round" />
<rect x="856.2" y="202.2" width="2.1" height="2.1" fill="#eee"/>
<rect x="859.0" y="202.2" width="2.1" height="2.1" fill="#eee"/>
<rect x="856.2" y="205.0" width="2.1" height="2.1" fill="#eee"/>
<rect x="859.0" y="205.0" width="2.1" height="2.1" fill="#eee"/>
<rect x="867.6" y="202" width="1.2" height="1.2" fill="#ccc"/><rect x="869.4" y="202" width="3.8" height="1.2" fill="#ccc"/>
<rect x="867.6" y="203.9" width="1.2" height="1.2" fill="#ccc"/><rect x="869.4" y="203.9" width="3.8" height="1.2" fill="#ccc"/>
<rect x="867.6" y="205.8" width="1.2" height="1.2" fill="#ccc"/><rect x="869.4" y="205.8" width="3.8" height="1.2" fill="#ccc"/>
<circle cx="777" cy="216.6" r="1.5" fill="none" stroke="#ccc" stroke-width="0.6"/>
<path d="M776,217.8 l-1.2,1.4" stroke="#ccc" stroke-width="0.7" fill="none" stroke-linecap="round" stroke-linejoin="round" />
<path d="M871.1999999999999,216.6 L872.4,217.79999999999998 L873.6,216.6" stroke="#bbb" stroke-width="0.7" fill="none" stroke-linecap="round" stroke-linejoin="round" />
<path d="M774.8,231.4 h3 l-1.5,2Z" fill="#ddd"/>
<path d="M776,327.4 h4 M778,325.4 v4" stroke="#e0e0e0" stroke-width="0.9" fill="none" stroke-linecap="round" stroke-linejoin="round" />
<path d="M780.2,329.2 v1.2 h-1.2Z" fill="#bbb"/>
<path d="M789,324.4 l2.4,2.6 h-1.5 v2 h-1.8 v-2 h-1.5Z" fill="#e0e0e0"/>
<ellipse cx="863.6" cy="327.6" rx="3.6" ry="2.5" fill="#8a8a8a"/><circle cx="863.6" cy="327.6" r="1.5" fill="#444"/><path d="M860.2,326.4 q3.4,-3 6.8,0" stroke="#aaa" stroke-width="0.6" fill="none"/>
<path d="M872.2,325.6 h4 M873.4,325.6 v-0.8 h1.6 v0.8 M872.7,326.2 l0.3,4 h2.4 l0.3,-4Z" stroke="#6a6a6a" stroke-width="0.6" fill="#5a5a5a"/>
<path d="M872.6,339.7 h3.6 M872.6,340.9 h3.6 M872.6,342.1 h3.6" stroke="#bbb" stroke-width="0.45" fill="none" stroke-linecap="round" stroke-linejoin="round" />
<circle cx="776.6" cy="354.6" r="1.3" fill="none" stroke="#ddd" stroke-width="0.55"/>
<path d="M775.7,355.6 l-1,1.2" stroke="#ddd" stroke-width="0.6" fill="none" stroke-linecap="round" stroke-linejoin="round" />
<path d="M807.1999999999999,354.7 L808.4,355.90000000000003 L809.6,354.7" stroke="#ccc" stroke-width="0.7" fill="none" stroke-linecap="round" stroke-linejoin="round" />
<rect x="816.8" y="352.6" width="5.6" height="4.6" rx="0.6" fill="none" stroke="#ddd" stroke-width="0.7"/><path d="M817.4,356.4 l1.4,-1.6 l1,1 l0.8,-0.7 l1.2,1.3Z" fill="#ddd"/>
<circle cx="831.2" cy="355" r="2.4" fill="none" stroke="#ddd" stroke-width="0.7"/><path d="M829.5,356.7 a2.4,2.4 0 0 1 3.4,-3.4Z" fill="#ddd"/>
<rect x="851.2" y="353" width="4" height="4" fill="none" stroke="#ddd" stroke-width="0.6"/>
<rect x="850.5" y="352.3" width="1.4" height="1.4" fill="#ddd"/>
<rect x="854.5" y="352.3" width="1.4" height="1.4" fill="#ddd"/>
<rect x="850.5" y="356.3" width="1.4" height="1.4" fill="#ddd"/>
<rect x="854.5" y="356.3" width="1.4" height="1.4" fill="#ddd"/>
<path d="M862,357.4 v-2.6 a2.2,2.2 0 0 1 4.2,-0.4 v3Z" fill="none" stroke="#ddd" stroke-width="0.7"/><rect x="861.6" y="355.4" width="3" height="2.2" fill="#ddd"/>
<circle cx="875.4" cy="353.2" r="1.5" fill="#eee"/><rect x="875" y="354.4" width="0.8" height="3.2" fill="#888"/>
<path d="M827.4,366.7 L828.6,367.90000000000003 L829.8000000000001,366.7" stroke="#ccc" stroke-width="0.7" fill="none" stroke-linecap="round" stroke-linejoin="round" />
<path d="M873.6999999999999,366.84999999999997 L874.8,367.95 L875.9,366.84999999999997" stroke="#ccc" stroke-width="0.7" fill="none" stroke-linecap="round" stroke-linejoin="round" />
<rect x="786.6" y="377.6" width="5" height="5" fill="none" stroke="#ddd" stroke-width="0.6"/>
<rect x="787.4" y="378.4" width="1.1" height="1.1" fill="#ddd"/>
<rect x="789.7" y="378.4" width="1.1" height="1.1" fill="#ddd"/>
<rect x="788.5" y="379.6" width="1.1" height="1.1" fill="#ddd"/>
<rect x="787.4" y="380.8" width="1.1" height="1.1" fill="#ddd"/>
<rect x="789.7" y="380.8" width="1.1" height="1.1" fill="#ddd"/>
<path d="M802.2,377 L799.4,380.8" stroke="#ddd" stroke-width="1.0" fill="none" stroke-linecap="round" stroke-linejoin="round" />
<path d="M799.6,380.4 q0.9,0.6 0.3,1.5 q-0.8,1 -2.2,0.9 q0.9,-0.6 0.9,-1.4 q0.2,-0.9 1,-1Z" fill="#ddd"/>
<path d="M809.6,377.2 v5.6 M806.8,380 h5.6" stroke="#ddd" stroke-width="0.7" fill="none" stroke-linecap="round" stroke-linejoin="round" />
<path d="M809.6,376.6 l1,1.1 h-2Z M809.6,383.4 l1,-1.1 h-2Z M806.2,380 l1.1,-1 v2Z M813,380 l-1.1,-1 v2Z" fill="#ddd"/>
<path d="M817.8,377.4 v4.6 h4.6 M816.6,378.6 h4.6 v4.6" stroke="#ddd" stroke-width="0.7" fill="none" stroke-linecap="round" stroke-linejoin="round" />
<rect x="828" y="379.6" width="4.4" height="3.4" rx="0.4" fill="#ddd"/><path d="M829,379.6 v-1 a1.2,1.2 0 0 1 2.4,0 v1" fill="none" stroke="#ddd" stroke-width="0.7"/>
<path d="M873.6999999999999,379.75 L874.8,380.85 L875.9,379.75" stroke="#ccc" stroke-width="0.7" fill="none" stroke-linecap="round" stroke-linejoin="round" />
<path d="M773.6,393.2 q3.3,-4.4 6.6,0 q-3.3,4.4 -6.6,0Z" fill="#eeeeee"/><circle cx="776.9" cy="393.2" r="1.25" fill="#3c3c3c"/>
<rect x="774.6" y="403" width="4.6" height="4.6" fill="none" stroke="#565656" stroke-width="0.5"/>
<rect x="785" y="388" width="15.4" height="10.6" fill="#fff" stroke="#eee" stroke-width="0.8"/>
<rect x="785.6" y="388.6" width="14.2" height="9.4" fill="url(#chk)"/>
<circle cx="790.4" cy="390.6" r="1.1" fill="#e8a020"/>
<circle cx="793.6" cy="391.6" r="1.1" fill="#e03020"/>
<circle cx="791.6" cy="394.4" r="1.1" fill="#8cbc40"/>
<circle cx="794.6" cy="395.2" r="1.1" fill="#f0c020"/>
<circle cx="790" cy="396" r="1.1" fill="#d04030"/>
<circle cx="793" cy="393.4" r="1.1" fill="#f08020"/>
<circle cx="795.4" cy="390" r="1.1" fill="#9cc050"/>
<rect x="786.4" y="401.2" width="13.4" height="9" fill="#fff"/>
<rect x="786.4" y="401.2" width="8.4" height="9" fill="#e2401f"/><rect x="794" y="404.6" width="5.8" height="5.6" fill="#9ab838"/><circle cx="790.2" cy="405" r="2.2" fill="#f06a30"/><rect x="795" y="401.6" width="4" height="2.6" fill="#f0d8d0"/>
<rect x="860.4" y="404.8" width="4.4" height="3.6" rx="0.4" fill="none" stroke="#ddd" stroke-width="0.6"/><path d="M861.3,404.8 v-1 a1.3,1.3 0 0 1 2.6,0 v1" fill="none" stroke="#ddd" stroke-width="0.6"/><rect x="862.3" y="405.8" width="0.7" height="1.5" fill="#ddd"/>
<rect x="786" y="477.8" width="3.6" height="2.4" rx="1.2" fill="none" stroke="#858585" stroke-width="0.6"/><rect x="788.6" y="477.8" width="3.6" height="2.4" rx="1.2" fill="none" stroke="#858585" stroke-width="0.6"/>
<path d="M806.6,481.2 v1.2 h-1.2Z" fill="#bbb"/>
<rect x="810.8" y="476.4" width="6.4" height="5" rx="0.5" fill="#dcdcdc"/><circle cx="814" cy="478.9" r="1.5" fill="#444"/>
<circle cx="826.6" cy="479" r="2.6" fill="none" stroke="#dcdcdc" stroke-width="0.7"/><path d="M824.8,480.8 a2.6,2.6 0 0 1 3.6,-3.6Z" fill="#dcdcdc"/>
<path d="M830.8,481.4 v1.2 h-1.2Z" fill="#bbb"/>
<path d="M836,476.6 h2.4 l0.8,0.9 h3.2 v4.2 h-6.4Z" fill="#dcdcdc"/>
<path d="M848.6,476.6 h5 v3.6 l-1.6,1.6 h-3.4Z" fill="none" stroke="#dcdcdc" stroke-width="0.7"/><path d="M853.6,480.2 h-1.6 v1.6Z" fill="#dcdcdc"/>
<path d="M860.4,477 h5 M862,477 v-0.8 h1.8 v0.8 M861,477.6 l0.4,4.4 h3 l0.4,-4.4Z" stroke="#dcdcdc" stroke-width="0.6" fill="none"/>
</svg>
<span style="left:401.1px;top:0.5999999999999996px;font-size:6.3px;line-height:10px;color:#d0d0d0;letter-spacing:-0.031px;">Adobe Photoshop CC 2018</span>
<span style="left:64.5px;top:13.2px;font-size:5px;line-height:10px;color:#e0e0e0;letter-spacing:-0.055px;">Resize Windows to Fit</span>
<span style="left:121px;top:13.2px;font-size:5px;line-height:10px;color:#e0e0e0;letter-spacing:-0.008px;">Zoom All Windows</span>
<span style="left:169.5px;top:13.2px;font-size:5px;line-height:10px;color:#777;letter-spacing:-0.001px;">Scrubby Zoom</span>
<span style="left:30px;top:27.9px;font-size:5.2px;line-height:10px;color:#e8e8e8;font-weight:bold;letter-spacing:0.136px;">shutterstock_111638786.jpg @ 66.7% (Background copy, RGB/8#) *</span>
<span style="left:24px;top:476.2px;font-size:4.8px;line-height:10px;color:#ddd;letter-spacing:-0.047px;">66.67%</span>
<span style="left:64.5px;top:476.2px;font-size:4.8px;line-height:10px;color:#ddd;letter-spacing:0.080px;">Doc: 5.93M/13.8M</span>
<span style="left:209.6px;top:13.100000000000001px;font-size:5px;line-height:10px;color:#ececec;letter-spacing:-0.147px;">100%</span>
<span style="left:234.4px;top:13.100000000000001px;font-size:5px;line-height:10px;color:#ececec;letter-spacing:-0.039px;">Fit Screen</span>
<span style="left:270.6px;top:13.100000000000001px;font-size:5px;line-height:10px;color:#ececec;letter-spacing:-0.020px;">Fill Screen</span>
<span style="left:5.1000000000000005px;top:219.39999999999998px;font-size:10.5px;line-height:10px;color:#dcdcdc;font-weight:bold;font-family:'Liberation Serif',serif;line-height:10px;">T</span>
<span style="left:756.2px;top:69.2px;font-size:8px;line-height:10px;color:#dcdcdc;line-height:10px;">A</span>
<span style="left:757.4px;top:82.4px;font-size:7.5px;line-height:10px;color:#dcdcdc;font-weight:bold;line-height:10px;">¶</span>
<span style="left:774.2px;top:33.2px;font-size:5px;line-height:10px;color:#f0f0f0;font-weight:bold;letter-spacing:0.069px;">Color</span>
<span style="left:795.2px;top:33.2px;font-size:5px;line-height:10px;color:#c8c8c8;letter-spacing:-0.010px;">Swatches</span>
<span style="left:774px;top:184.5px;font-size:5px;line-height:10px;color:#f0f0f0;font-weight:bold;letter-spacing:-0.013px;">Libraries</span>
<span style="left:803px;top:184.5px;font-size:5px;line-height:10px;color:#c8c8c8;letter-spacing:0.226px;">Adjustments</span>
<span style="left:841px;top:184.5px;font-size:5px;line-height:10px;color:#c8c8c8;letter-spacing:0.097px;">Styles</span>
<span style="left:778.6px;top:198.8px;font-size:5px;line-height:10px;color:#e6e6e6;letter-spacing:0.066px;">My Library</span>
<span style="left:781px;top:212.2px;font-size:5px;line-height:10px;color:#6e6e6e;letter-spacing:0.038px;">Search Adobe Stock</span>
<span style="left:780px;top:227.4px;font-size:5px;line-height:10px;color:#d6d6d6;letter-spacing:0.092px;">Colors</span>
<span style="left:774px;top:336.0px;font-size:5px;line-height:10px;color:#f0f0f0;font-weight:bold;letter-spacing:-0.087px;">Layers</span>
<span style="left:798px;top:336.0px;font-size:5px;line-height:10px;color:#c8c8c8;letter-spacing:0.059px;">Channels</span>
<span style="left:828px;top:336.0px;font-size:5px;line-height:10px;color:#c8c8c8;letter-spacing:0.003px;">Paths</span>
<span style="left:780.4px;top:350.2px;font-size:5px;line-height:10px;color:#e6e6e6;letter-spacing:0.098px;">Kind</span>
<span style="left:840px;top:350.2px;font-size:6.6px;line-height:10px;color:#ddd;font-weight:bold;font-family:'Liberation Serif',serif;">T</span>
<span style="left:775px;top:362.3px;font-size:5px;line-height:10px;color:#e6e6e6;letter-spacing:-0.119px;">Normal</span>
<span style="left:834.2px;top:362.3px;font-size:5px;line-height:10px;color:#d0d0d0;letter-spacing:-0.092px;">Opacity:</span>
<span style="left:856.4px;top:362.3px;font-size:5px;line-height:10px;color:#e6e6e6;letter-spacing:-0.347px;">100%</span>
<span style="left:772.2px;top:375.2px;font-size:5px;line-height:10px;color:#d0d0d0;letter-spacing:-0.150px;">Lock:</span>
<span style="left:845.4px;top:375.2px;font-size:5px;line-height:10px;color:#d0d0d0;letter-spacing:-0.075px;">Fill:</span>
<span style="left:856.4px;top:375.2px;font-size:5px;line-height:10px;color:#e6e6e6;letter-spacing:-0.347px;">100%</span>
<span style="left:804px;top:388.4px;font-size:5px;line-height:10px;color:#f2f2f2;letter-spacing:-0.042px;">Background copy</span>
<span style="left:804px;top:400.6px;font-size:5px;line-height:10px;color:#e0e0e0;letter-spacing:-0.069px;">Background</span>
<span style="left:799.2px;top:473.8px;font-size:6px;line-height:10px;color:#dcdcdc;font-weight:bold;font-style:italic;font-family:'Liberation Serif',serif;">fx</span>
</div>
</body>
</html>
